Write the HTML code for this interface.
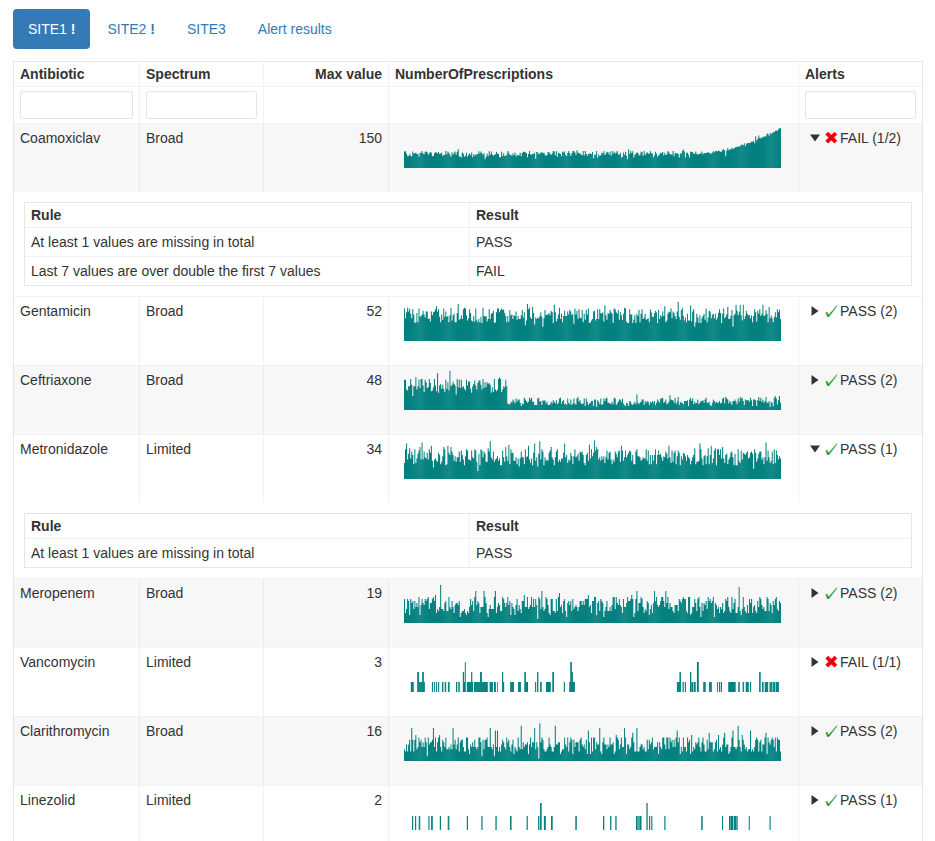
<!DOCTYPE html><html lang="en"><head><meta charset="utf-8"><title>Antibiotic prescriptions</title><style>

*{box-sizing:border-box}
html,body{margin:0;padding:0}
body{font-family:"Liberation Sans",Arial,sans-serif;font-size:14px;line-height:20px;color:#333;background:#fff;width:935px;height:841px;overflow:hidden}
.wrap{padding:9px 13px 0 13px}
.nav{list-style:none;margin:0;padding:0;display:flex}
.nav li{margin-right:2px}
.nav a{display:block;padding:10px 15px;border-radius:4px;color:#337ab7;text-decoration:none}
.nav li.active a{background:#337ab7;color:#fff}
.tbl{margin-top:12px;border:1px solid #e6e6e6;border-bottom:0;width:910px}
.tr{display:flex}
.th,.td{padding:4px 6px;flex:0 0 auto;overflow:hidden}
.c1{width:125px}.c2{width:124px}.c3{width:125px;text-align:right}.c4{width:410px}.c5{width:124px}
.c2,.c3,.c4,.c5{border-left:1px solid rgba(0,0,0,.05)}
.head .th{font-weight:bold;line-height:16px;height:24px;white-space:nowrap}
.head{border-bottom:1px solid rgba(0,0,0,.05)}
.filt .td{height:36px;border-top:0}
.filt input{display:block;width:100%;height:28px;margin:0;padding:5px 7px;border:1px solid rgba(0,0,0,.1);border-radius:3px;background:#fff;font:inherit;color:inherit;outline:none;box-shadow:none;-webkit-appearance:none;appearance:none}
.row{border-top:1px solid rgba(0,0,0,.05);height:69px}
.row.s{background:rgba(0,0,0,.03);border-top-color:rgba(0,0,0,.022)}
.row .td{height:68px}
.c4 svg{display:block}
.exp{display:inline-block;position:relative;width:0;margin:0 10px;height:20px;vertical-align:top}
.exp:after{content:"";position:absolute;top:10px;left:0;width:0;height:0;border-left:5.04px solid transparent;border-right:5.04px solid transparent;border-top:7px solid rgba(0,0,0,.8);transform:translate(-50%,-50%) rotate(-90deg)}
.exp.open:after{transform:translate(-50%,-50%)}
.ic{display:inline-block;width:11.73px;height:20px;vertical-align:top;position:relative;margin-right:-0.6px}
.ic b{position:absolute;font-family:"DejaVu Sans",sans-serif;font-weight:normal;line-height:20px;white-space:nowrap}
.ic.fail b{color:#f30000;font-size:17.6px;left:-1.1px;top:0}
.ic.pass b{color:#0c9216;font-family:"IPAGothic","DejaVu Sans",sans-serif;font-size:17px;left:-2.9px;top:1.2px;-webkit-text-stroke:0.3px #0c9216}
.det{padding:10px}
.det.first{}
.itbl{border:1px solid #e6e6e6}
.itbl .tr + .tr{border-top:1px solid rgba(0,0,0,.05)}
.itbl .th{font-weight:bold;line-height:16px;height:24px;width:444px}
.itbl .td{height:28px;width:444px}
.itbl .th + .th,.itbl .td + .td{border-left:1px solid rgba(0,0,0,.05);width:442px}

</style></head><body><div class="wrap">
<ul class="nav"><li class="active"><a href="#site1">SITE1 <b>!</b></a></li><li><a href="#site2">SITE2 <b>!</b></a></li><li><a href="#site3">SITE3</a></li><li><a href="#alert-results">Alert results</a></li></ul>
<svg width="0" height="0" style="position:absolute"><defs><linearGradient id="tg" gradientUnits="userSpaceOnUse" x1="15.5" y1="0" x2="44.8" y2="0" spreadMethod="repeat"><stop offset="0" stop-color="#138a87"/><stop offset="0.3" stop-color="#028180"/><stop offset="0.7" stop-color="#028180"/><stop offset="1" stop-color="#138a87"/></linearGradient></defs></svg>
<div class="tbl">
<div class="tr head"><div class="th c1">Antibiotic</div><div class="th c2">Spectrum</div><div class="th c3">Max value</div><div class="th c4">NumberOfPrescriptions</div><div class="th c5">Alerts</div></div>
<div class="tr filt"><div class="td c1"><input type="text" aria-label="Filter Antibiotic"></div><div class="td c2"><input type="text" aria-label="Filter Spectrum"></div><div class="td c3"></div><div class="td c4"></div><div class="td c5"><input type="text" aria-label="Filter Alerts"></div></div>
<div class="tr row s"><div class="td c1">Coamoxiclav</div><div class="td c2">Broad</div><div class="td c3">150</div>
<div class="td c4"><svg width="397" height="60" viewBox="0 0 397 60"><path transform="translate(9,0)" fill="url(#tg)" d="M-0.01 40v-16.43h1.05v16.43zM1.02 40v-16.73h1.05v16.73zM2.06 40v-14.16h1.05v14.16zM3.09 40v-11.80h1.05v11.80zM4.12 40v-12.01h1.05v12.01zM5.15 40v-14.10h1.05v14.10zM6.19 40v-12.14h1.05v12.14zM7.22 40v-11.38h1.05v11.38zM8.25 40v-16.40h1.05v16.40zM9.29 40v-14.29h1.05v14.29zM10.32 40v-15.05h1.05v15.05zM11.35 40v-15.20h1.05v15.20zM12.38 40v-14.05h1.05v14.05zM13.42 40v-13.92h1.05v13.92zM14.45 40v-11.25h1.05v11.25zM15.48 40v-15.04h1.05v15.04zM16.52 40v-15.20h1.05v15.20zM17.55 40v-16.95h1.05v16.95zM18.58 40v-14.42h1.05v14.42zM19.61 40v-13.77h1.05v13.77zM20.65 40v-16.33h1.05v16.33zM21.68 40v-16.40h1.05v16.40zM22.71 40v-15.73h1.05v15.73zM23.75 40v-13.36h1.05v13.36zM24.78 40v-14.44h1.05v14.44zM25.81 40v-15.94h1.05v15.94zM26.84 40v-15.33h1.05v15.33zM27.88 40v-11.80h1.05v11.80zM28.91 40v-12.03h1.05v12.03zM29.94 40v-14.87h1.05v14.87zM30.98 40v-15.80h1.05v15.80zM32.01 40v-15.38h1.05v15.38zM33.04 40v-14.44h1.05v14.44zM34.07 40v-16.06h1.05v16.06zM35.11 40v-13.94h1.05v13.94zM36.14 40v-14.41h1.05v14.41zM37.17 40v-15.28h1.05v15.28zM38.21 40v-12.02h1.05v12.02zM39.24 40v-13.29h1.05v13.29zM40.27 40v-13.11h1.05v13.11zM41.31 40v-16.95h1.05v16.95zM42.34 40v-13.87h1.05v13.87zM43.37 40v-16.40h1.05v16.40zM44.40 40v-15.19h1.05v15.19zM45.44 40v-13.52h1.05v13.52zM46.47 40v-11.16h1.05v11.16zM47.50 40v-15.83h1.05v15.83zM48.54 40v-13.28h1.05v13.28zM49.57 40v-15.37h1.05v15.37zM50.60 40v-16.40h1.05v16.40zM51.63 40v-13.23h1.05v13.23zM52.67 40v-16.37h1.05v16.37zM53.70 40v-18.80h1.05v18.80zM54.73 40v-11.62h1.05v11.62zM55.77 40v-11.57h1.05v11.57zM56.80 40v-10.40h1.05v10.40zM57.83 40v-15.39h1.05v15.39zM58.86 40v-14.34h1.05v14.34zM59.90 40v-11.20h1.05v11.20zM60.93 40v-12.21h1.05v12.21zM61.96 40v-15.13h1.05v15.13zM63.00 40v-11.20h1.05v11.20zM64.03 40v-13.23h1.05v13.23zM65.06 40v-14.40h1.05v14.40zM66.09 40v-12.63h1.05v12.63zM67.13 40v-15.45h1.05v15.45zM68.16 40v-10.82h1.05v10.82zM69.19 40v-13.87h1.05v13.87zM70.23 40v-12.20h1.05v12.20zM71.26 40v-13.80h1.05v13.80zM72.29 40v-13.59h1.05v13.59zM73.32 40v-14.07h1.05v14.07zM74.36 40v-16.82h1.05v16.82zM75.39 40v-14.82h1.05v14.82zM76.42 40v-16.51h1.05v16.51zM77.46 40v-14.80h1.05v14.80zM78.49 40v-13.15h1.05v13.15zM79.52 40v-14.74h1.05v14.74zM80.55 40v-8.78h1.05v8.78zM81.59 40v-11.20h1.05v11.20zM82.62 40v-14.34h1.05v14.34zM83.65 40v-11.75h1.05v11.75zM84.69 40v-16.80h1.05v16.80zM85.72 40v-13.00h1.05v13.00zM86.75 40v-16.40h1.05v16.40zM87.78 40v-13.64h1.05v13.64zM88.82 40v-12.22h1.05v12.22zM89.85 40v-13.07h1.05v13.07zM90.88 40v-13.76h1.05v13.76zM91.92 40v-16.36h1.05v16.36zM92.95 40v-14.23h1.05v14.23zM93.98 40v-13.99h1.05v13.99zM95.01 40v-10.80h1.05v10.80zM96.05 40v-10.68h1.05v10.68zM97.08 40v-16.34h1.05v16.34zM98.11 40v-12.04h1.05v12.04zM99.15 40v-14.80h1.05v14.80zM100.18 40v-11.95h1.05v11.95zM101.21 40v-12.23h1.05v12.23zM102.24 40v-13.30h1.05v13.30zM103.28 40v-16.95h1.05v16.95zM104.31 40v-15.33h1.05v15.33zM105.34 40v-12.92h1.05v12.92zM106.38 40v-13.51h1.05v13.51zM107.41 40v-11.90h1.05v11.90zM108.44 40v-14.80h1.05v14.80zM109.47 40v-12.98h1.05v12.98zM110.51 40v-15.38h1.05v15.38zM111.54 40v-11.52h1.05v11.52zM112.57 40v-13.42h1.05v13.42zM113.61 40v-12.48h1.05v12.48zM114.64 40v-12.71h1.05v12.71zM115.67 40v-15.36h1.05v15.36zM116.71 40v-11.80h1.05v11.80zM117.74 40v-15.12h1.05v15.12zM118.77 40v-16.24h1.05v16.24zM119.80 40v-16.17h1.05v16.17zM120.84 40v-15.80h1.05v15.80zM121.87 40v-15.04h1.05v15.04zM122.90 40v-10.77h1.05v10.77zM123.94 40v-13.92h1.05v13.92zM124.97 40v-16.95h1.05v16.95zM126.00 40v-13.68h1.05v13.68zM127.03 40v-13.36h1.05v13.36zM128.07 40v-14.36h1.05v14.36zM129.10 40v-14.07h1.05v14.07zM130.13 40v-15.20h1.05v15.20zM131.17 40v-9.20h1.05v9.20zM132.20 40v-16.05h1.05v16.05zM133.23 40v-15.69h1.05v15.69zM134.26 40v-13.65h1.05v13.65zM135.30 40v-14.62h1.05v14.62zM136.33 40v-15.26h1.05v15.26zM137.36 40v-15.95h1.05v15.95zM138.40 40v-14.77h1.05v14.77zM139.43 40v-15.20h1.05v15.20zM140.46 40v-13.55h1.05v13.55zM141.49 40v-12.06h1.05v12.06zM142.53 40v-13.12h1.05v13.12zM143.56 40v-15.93h1.05v15.93zM144.59 40v-15.85h1.05v15.85zM145.63 40v-14.31h1.05v14.31zM146.66 40v-12.99h1.05v12.99zM147.69 40v-14.61h1.05v14.61zM148.72 40v-16.95h1.05v16.95zM149.76 40v-16.55h1.05v16.55zM150.79 40v-12.77h1.05v12.77zM151.82 40v-16.80h1.05v16.80zM152.86 40v-11.35h1.05v11.35zM153.89 40v-15.20h1.05v15.20zM154.92 40v-14.39h1.05v14.39zM155.95 40v-14.09h1.05v14.09zM156.99 40v-11.80h1.05v11.80zM158.02 40v-16.39h1.05v16.39zM159.05 40v-15.59h1.05v15.59zM160.09 40v-16.49h1.05v16.49zM161.12 40v-13.03h1.05v13.03zM162.15 40v-11.95h1.05v11.95zM163.18 40v-14.97h1.05v14.97zM164.22 40v-16.95h1.05v16.95zM165.25 40v-14.70h1.05v14.70zM166.28 40v-11.90h1.05v11.90zM167.32 40v-14.49h1.05v14.49zM168.35 40v-16.68h1.05v16.68zM169.38 40v-17.20h1.05v17.20zM170.41 40v-15.53h1.05v15.53zM171.45 40v-12.91h1.05v12.91zM172.48 40v-17.80h1.05v17.80zM173.51 40v-15.50h1.05v15.50zM174.55 40v-14.60h1.05v14.60zM175.58 40v-14.80h1.05v14.80zM176.61 40v-13.28h1.05v13.28zM177.64 40v-12.77h1.05v12.77zM178.68 40v-16.95h1.05v16.95zM179.71 40v-12.41h1.05v12.41zM180.74 40v-16.95h1.05v16.95zM181.78 40v-13.97h1.05v13.97zM182.81 40v-12.12h1.05v12.12zM183.84 40v-14.04h1.05v14.04zM184.87 40v-14.28h1.05v14.28zM185.91 40v-14.41h1.05v14.41zM186.94 40v-13.68h1.05v13.68zM187.97 40v-16.04h1.05v16.04zM189.01 40v-9.74h1.05v9.74zM190.04 40v-13.01h1.05v13.01zM191.07 40v-13.55h1.05v13.55zM192.11 40v-16.95h1.05v16.95zM193.14 40v-10.34h1.05v10.34zM194.17 40v-13.41h1.05v13.41zM195.20 40v-11.92h1.05v11.92zM196.24 40v-12.81h1.05v12.81zM197.27 40v-15.23h1.05v15.23zM198.30 40v-14.80h1.05v14.80zM199.34 40v-16.71h1.05v16.71zM200.37 40v-12.93h1.05v12.93zM201.40 40v-14.54h1.05v14.54zM202.43 40v-16.22h1.05v16.22zM203.47 40v-15.71h1.05v15.71zM204.50 40v-13.42h1.05v13.42zM205.53 40v-16.13h1.05v16.13zM206.57 40v-12.33h1.05v12.33zM207.60 40v-16.95h1.05v16.95zM208.63 40v-14.33h1.05v14.33zM209.66 40v-16.40h1.05v16.40zM210.70 40v-14.54h1.05v14.54zM211.73 40v-15.61h1.05v15.61zM212.76 40v-16.95h1.05v16.95zM213.80 40v-13.78h1.05v13.78zM214.83 40v-13.36h1.05v13.36zM215.86 40v-15.13h1.05v15.13zM216.89 40v-10.40h1.05v10.40zM217.93 40v-10.89h1.05v10.89zM218.96 40v-15.59h1.05v15.59zM219.99 40v-13.34h1.05v13.34zM221.03 40v-16.13h1.05v16.13zM222.06 40v-12.14h1.05v12.14zM223.09 40v-8.67h1.05v8.67zM224.12 40v-18.80h1.05v18.80zM225.16 40v-14.33h1.05v14.33zM226.19 40v-16.95h1.05v16.95zM227.22 40v-15.01h1.05v15.01zM228.26 40v-16.80h1.05v16.80zM229.29 40v-10.40h1.05v10.40zM230.32 40v-13.36h1.05v13.36zM231.35 40v-14.18h1.05v14.18zM232.39 40v-15.80h1.05v15.80zM233.42 40v-15.00h1.05v15.00zM234.45 40v-12.55h1.05v12.55zM235.49 40v-13.21h1.05v13.21zM236.52 40v-16.40h1.05v16.40zM237.55 40v-15.74h1.05v15.74zM238.58 40v-12.17h1.05v12.17zM239.62 40v-16.95h1.05v16.95zM240.65 40v-12.94h1.05v12.94zM241.68 40v-14.80h1.05v14.80zM242.72 40v-15.80h1.05v15.80zM243.75 40v-14.46h1.05v14.46zM244.78 40v-14.36h1.05v14.36zM245.81 40v-16.95h1.05v16.95zM246.85 40v-14.80h1.05v14.80zM247.88 40v-14.87h1.05v14.87zM248.91 40v-10.66h1.05v10.66zM249.95 40v-12.65h1.05v12.65zM250.98 40v-16.20h1.05v16.20zM252.01 40v-14.40h1.05v14.40zM253.04 40v-11.20h1.05v11.20zM254.08 40v-12.85h1.05v12.85zM255.11 40v-13.47h1.05v13.47zM256.14 40v-15.31h1.05v15.31zM257.18 40v-14.76h1.05v14.76zM258.21 40v-15.89h1.05v15.89zM259.24 40v-12.52h1.05v12.52zM260.27 40v-15.20h1.05v15.20zM261.31 40v-13.11h1.05v13.11zM262.34 40v-13.49h1.05v13.49zM263.37 40v-16.95h1.05v16.95zM264.41 40v-15.80h1.05v15.80zM265.44 40v-13.78h1.05v13.78zM266.47 40v-13.65h1.05v13.65zM267.51 40v-13.33h1.05v13.33zM268.54 40v-16.93h1.05v16.93zM269.57 40v-11.80h1.05v11.80zM270.60 40v-15.37h1.05v15.37zM271.64 40v-14.38h1.05v14.38zM272.67 40v-14.80h1.05v14.80zM273.70 40v-13.90h1.05v13.90zM274.74 40v-10.40h1.05v10.40zM275.77 40v-14.78h1.05v14.78zM276.80 40v-14.20h1.05v14.20zM277.83 40v-16.95h1.05v16.95zM278.87 40v-18.80h1.05v18.80zM279.90 40v-16.49h1.05v16.49zM280.93 40v-10.49h1.05v10.49zM281.97 40v-15.20h1.05v15.20zM283.00 40v-15.34h1.05v15.34zM284.03 40v-13.20h1.05v13.20zM285.06 40v-10.40h1.05v10.40zM286.10 40v-16.15h1.05v16.15zM287.13 40v-16.22h1.05v16.22zM288.16 40v-15.64h1.05v15.64zM289.20 40v-14.34h1.05v14.34zM290.23 40v-14.17h1.05v14.17zM291.26 40v-16.40h1.05v16.40zM292.29 40v-14.01h1.05v14.01zM293.33 40v-13.46h1.05v13.46zM294.36 40v-13.75h1.05v13.75zM295.39 40v-14.22h1.05v14.22zM296.43 40v-14.69h1.05v14.69zM297.46 40v-16.40h1.05v16.40zM298.49 40v-13.40h1.05v13.40zM299.52 40v-15.05h1.05v15.05zM300.56 40v-14.66h1.05v14.66zM301.59 40v-15.10h1.05v15.10zM302.62 40v-15.20h1.05v15.20zM303.66 40v-16.12h1.05v16.12zM304.69 40v-15.05h1.05v15.05zM305.72 40v-14.84h1.05v14.84zM306.75 40v-14.29h1.05v14.29zM307.79 40v-15.53h1.05v15.53zM308.82 40v-16.80h1.05v16.80zM309.85 40v-15.67h1.05v15.67zM310.89 40v-17.20h1.05v17.20zM311.92 40v-16.83h1.05v16.83zM312.95 40v-16.74h1.05v16.74zM313.98 40v-17.50h1.05v17.50zM315.02 40v-16.68h1.05v16.68zM316.05 40v-16.27h1.05v16.27zM317.08 40v-16.18h1.05v16.18zM318.12 40v-18.17h1.05v18.17zM319.15 40v-18.80h1.05v18.80zM320.18 40v-17.56h1.05v17.56zM321.21 40v-11.80h1.05v11.80zM322.25 40v-17.62h1.05v17.62zM323.28 40v-20.04h1.05v20.04zM324.31 40v-17.80h1.05v17.80zM325.35 40v-18.60h1.05v18.60zM326.38 40v-18.77h1.05v18.77zM327.41 40v-20.50h1.05v20.50zM328.44 40v-18.86h1.05v18.86zM329.48 40v-19.60h1.05v19.60zM330.51 40v-20.44h1.05v20.44zM331.54 40v-20.91h1.05v20.91zM332.58 40v-21.05h1.05v21.05zM333.61 40v-21.80h1.05v21.80zM334.64 40v-21.36h1.05v21.36zM335.67 40v-21.89h1.05v21.89zM336.71 40v-23.40h1.05v23.40zM337.74 40v-23.21h1.05v23.21zM338.77 40v-22.63h1.05v22.63zM339.81 40v-24.82h1.05v24.82zM340.84 40v-22.04h1.05v22.04zM341.87 40v-24.16h1.05v24.16zM342.91 40v-25.03h1.05v25.03zM343.94 40v-24.80h1.05v24.80zM344.97 40v-25.33h1.05v25.33zM346.00 40v-25.30h1.05v25.30zM347.04 40v-26.52h1.05v26.52zM348.07 40v-26.27h1.05v26.27zM349.10 40v-27.20h1.05v27.20zM350.14 40v-24.85h1.05v24.85zM351.17 40v-31.80h1.05v31.80zM352.20 40v-27.46h1.05v27.46zM353.23 40v-29.37h1.05v29.37zM354.27 40v-32.40h1.05v32.40zM355.30 40v-30.09h1.05v30.09zM356.33 40v-29.59h1.05v29.59zM357.37 40v-30.77h1.05v30.77zM358.40 40v-30.59h1.05v30.59zM359.43 40v-31.54h1.05v31.54zM360.46 40v-31.74h1.05v31.74zM361.50 40v-31.61h1.05v31.61zM362.53 40v-34.52h1.05v34.52zM363.56 40v-33.97h1.05v33.97zM364.60 40v-32.13h1.05v32.13zM365.63 40v-35.15h1.05v35.15zM366.66 40v-33.74h1.05v33.74zM367.69 40v-35.27h1.05v35.27zM368.73 40v-35.51h1.05v35.51zM369.76 40v-36.10h1.05v36.10zM370.79 40v-37.32h1.05v37.32zM371.83 40v-37.40h1.05v37.40zM372.86 40v-37.02h1.05v37.02zM373.89 40v-38.82h1.05v38.82zM374.92 40v-39.72h1.05v39.72zM375.96 40v-39.74h1.05v39.74z"/></svg></div>
<div class="td c5"><span class="exp open"></span><span class="ic fail"><b>&#10006;</b></span> FAIL (1/2)</div></div>
<div class="det"><div class="itbl"><div class="tr"><div class="th">Rule</div><div class="th">Result</div></div>
<div class="tr"><div class="td">At least 1 values are missing in total</div><div class="td">PASS</div></div>
<div class="tr"><div class="td">Last 7 values are over double the first 7 values</div><div class="td">FAIL</div></div>
</div></div>
<div class="tr row"><div class="td c1">Gentamicin</div><div class="td c2">Broad</div><div class="td c3">52</div>
<div class="td c4"><svg width="397" height="60" viewBox="0 0 397 60"><path transform="translate(9,0)" fill="url(#tg)" d="M-0.01 40v-32.45h1.05v32.45zM1.02 40v-22.64h1.05v22.64zM2.06 40v-28.68h1.05v28.68zM3.09 40v-33.21h1.05v33.21zM4.12 40v-29.43h1.05v29.43zM5.15 40v-32.45h1.05v32.45zM6.19 40v-27.17h1.05v27.17zM7.22 40v-22.64h1.05v22.64zM8.25 40v-31.70h1.05v31.70zM9.29 40v-26.42h1.05v26.42zM10.32 40v-18.11h1.05v18.11zM11.35 40v-18.87h1.05v18.87zM12.38 40v-27.92h1.05v27.92zM13.42 40v-18.87h1.05v18.87zM14.45 40v-32.45h1.05v32.45zM15.48 40v-24.15h1.05v24.15zM16.52 40v-24.91h1.05v24.91zM17.55 40v-26.42h1.05v26.42zM18.58 40v-30.19h1.05v30.19zM19.61 40v-26.42h1.05v26.42zM20.65 40v-23.40h1.05v23.40zM21.68 40v-29.43h1.05v29.43zM22.71 40v-29.43h1.05v29.43zM23.75 40v-21.89h1.05v21.89zM24.78 40v-22.64h1.05v22.64zM25.81 40v-19.62h1.05v19.62zM26.84 40v-29.43h1.05v29.43zM27.88 40v-25.66h1.05v25.66zM28.91 40v-28.68h1.05v28.68zM29.94 40v-29.43h1.05v29.43zM30.98 40v-31.70h1.05v31.70zM32.01 40v-34.72h1.05v34.72zM33.04 40v-29.43h1.05v29.43zM34.07 40v-31.70h1.05v31.70zM35.11 40v-24.15h1.05v24.15zM36.14 40v-18.87h1.05v18.87zM37.17 40v-26.42h1.05v26.42zM38.21 40v-21.13h1.05v21.13zM39.24 40v-32.45h1.05v32.45zM40.27 40v-24.15h1.05v24.15zM41.31 40v-29.43h1.05v29.43zM42.34 40v-24.15h1.05v24.15zM43.37 40v-24.91h1.05v24.91zM44.40 40v-18.87h1.05v18.87zM45.44 40v-25.66h1.05v25.66zM46.47 40v-33.21h1.05v33.21zM47.50 40v-20.38h1.05v20.38zM48.54 40v-25.66h1.05v25.66zM49.57 40v-27.17h1.05v27.17zM50.60 40v-18.87h1.05v18.87zM51.63 40v-18.87h1.05v18.87zM52.67 40v-27.92h1.05v27.92zM53.70 40v-36.98h1.05v36.98zM54.73 40v-21.13h1.05v21.13zM55.77 40v-21.89h1.05v21.89zM56.80 40v-25.66h1.05v25.66zM57.83 40v-21.89h1.05v21.89zM58.86 40v-31.70h1.05v31.70zM59.90 40v-33.21h1.05v33.21zM60.93 40v-32.45h1.05v32.45zM61.96 40v-25.66h1.05v25.66zM63.00 40v-20.38h1.05v20.38zM64.03 40v-22.64h1.05v22.64zM65.06 40v-31.70h1.05v31.70zM66.09 40v-27.92h1.05v27.92zM67.13 40v-20.38h1.05v20.38zM68.16 40v-19.62h1.05v19.62zM69.19 40v-24.91h1.05v24.91zM70.23 40v-19.62h1.05v19.62zM71.26 40v-32.45h1.05v32.45zM72.29 40v-21.13h1.05v21.13zM73.32 40v-18.87h1.05v18.87zM74.36 40v-21.89h1.05v21.89zM75.39 40v-18.87h1.05v18.87zM76.42 40v-24.15h1.05v24.15zM77.46 40v-18.11h1.05v18.11zM78.49 40v-33.21h1.05v33.21zM79.52 40v-24.91h1.05v24.91zM80.55 40v-24.15h1.05v24.15zM81.59 40v-24.91h1.05v24.91zM82.62 40v-19.62h1.05v19.62zM83.65 40v-21.89h1.05v21.89zM84.69 40v-31.70h1.05v31.70zM85.72 40v-21.89h1.05v21.89zM86.75 40v-27.17h1.05v27.17zM87.78 40v-27.92h1.05v27.92zM88.82 40v-30.19h1.05v30.19zM89.85 40v-18.11h1.05v18.11zM90.88 40v-18.87h1.05v18.87zM91.92 40v-28.68h1.05v28.68zM92.95 40v-32.45h1.05v32.45zM93.98 40v-32.45h1.05v32.45zM95.01 40v-28.68h1.05v28.68zM96.05 40v-30.94h1.05v30.94zM97.08 40v-32.45h1.05v32.45zM98.11 40v-30.94h1.05v30.94zM99.15 40v-31.70h1.05v31.70zM100.18 40v-27.92h1.05v27.92zM101.21 40v-24.91h1.05v24.91zM102.24 40v-18.87h1.05v18.87zM103.28 40v-24.91h1.05v24.91zM104.31 40v-19.62h1.05v19.62zM105.34 40v-30.94h1.05v30.94zM106.38 40v-25.66h1.05v25.66zM107.41 40v-26.42h1.05v26.42zM108.44 40v-21.89h1.05v21.89zM109.47 40v-25.66h1.05v25.66zM110.51 40v-24.91h1.05v24.91zM111.54 40v-29.43h1.05v29.43zM112.57 40v-21.13h1.05v21.13zM113.61 40v-24.91h1.05v24.91zM114.64 40v-21.89h1.05v21.89zM115.67 40v-21.89h1.05v21.89zM116.71 40v-25.66h1.05v25.66zM117.74 40v-30.94h1.05v30.94zM118.77 40v-23.40h1.05v23.40zM119.80 40v-28.68h1.05v28.68zM120.84 40v-15.85h1.05v15.85zM121.87 40v-20.38h1.05v20.38zM122.90 40v-36.98h1.05v36.98zM123.94 40v-31.70h1.05v31.70zM124.97 40v-33.21h1.05v33.21zM126.00 40v-23.40h1.05v23.40zM127.03 40v-21.89h1.05v21.89zM128.07 40v-33.96h1.05v33.96zM129.10 40v-27.92h1.05v27.92zM130.13 40v-16.60h1.05v16.60zM131.17 40v-23.40h1.05v23.40zM132.20 40v-21.89h1.05v21.89zM133.23 40v-23.40h1.05v23.40zM134.26 40v-22.64h1.05v22.64zM135.30 40v-24.91h1.05v24.91zM136.33 40v-28.68h1.05v28.68zM137.36 40v-24.15h1.05v24.15zM138.40 40v-14.34h1.05v14.34zM139.43 40v-22.64h1.05v22.64zM140.46 40v-30.94h1.05v30.94zM141.49 40v-25.66h1.05v25.66zM142.53 40v-26.42h1.05v26.42zM143.56 40v-26.42h1.05v26.42zM144.59 40v-27.92h1.05v27.92zM145.63 40v-25.66h1.05v25.66zM146.66 40v-30.19h1.05v30.19zM147.69 40v-28.68h1.05v28.68zM148.72 40v-18.11h1.05v18.11zM149.76 40v-36.23h1.05v36.23zM150.79 40v-28.68h1.05v28.68zM151.82 40v-19.62h1.05v19.62zM152.86 40v-21.89h1.05v21.89zM153.89 40v-26.42h1.05v26.42zM154.92 40v-33.21h1.05v33.21zM155.95 40v-21.89h1.05v21.89zM156.99 40v-27.17h1.05v27.17zM158.02 40v-18.87h1.05v18.87zM159.05 40v-24.91h1.05v24.91zM160.09 40v-30.19h1.05v30.19zM161.12 40v-24.91h1.05v24.91zM162.15 40v-24.91h1.05v24.91zM163.18 40v-29.43h1.05v29.43zM164.22 40v-26.42h1.05v26.42zM165.25 40v-30.94h1.05v30.94zM166.28 40v-29.43h1.05v29.43zM167.32 40v-25.66h1.05v25.66zM168.35 40v-27.17h1.05v27.17zM169.38 40v-17.36h1.05v17.36zM170.41 40v-32.45h1.05v32.45zM171.45 40v-26.42h1.05v26.42zM172.48 40v-30.19h1.05v30.19zM173.51 40v-21.89h1.05v21.89zM174.55 40v-31.70h1.05v31.70zM175.58 40v-23.40h1.05v23.40zM176.61 40v-22.64h1.05v22.64zM177.64 40v-30.94h1.05v30.94zM178.68 40v-18.87h1.05v18.87zM179.71 40v-27.17h1.05v27.17zM180.74 40v-21.13h1.05v21.13zM181.78 40v-30.94h1.05v30.94zM182.81 40v-26.42h1.05v26.42zM183.84 40v-32.45h1.05v32.45zM184.87 40v-18.11h1.05v18.11zM185.91 40v-18.87h1.05v18.87zM186.94 40v-20.38h1.05v20.38zM187.97 40v-21.89h1.05v21.89zM189.01 40v-29.43h1.05v29.43zM190.04 40v-30.19h1.05v30.19zM191.07 40v-20.38h1.05v20.38zM192.11 40v-21.89h1.05v21.89zM193.14 40v-31.70h1.05v31.70zM194.17 40v-21.89h1.05v21.89zM195.20 40v-31.70h1.05v31.70zM196.24 40v-27.92h1.05v27.92zM197.27 40v-27.17h1.05v27.17zM198.30 40v-28.68h1.05v28.68zM199.34 40v-19.62h1.05v19.62zM200.37 40v-35.47h1.05v35.47zM201.40 40v-25.66h1.05v25.66zM202.43 40v-21.13h1.05v21.13zM203.47 40v-27.92h1.05v27.92zM204.50 40v-27.17h1.05v27.17zM205.53 40v-30.94h1.05v30.94zM206.57 40v-28.68h1.05v28.68zM207.60 40v-27.17h1.05v27.17zM208.63 40v-18.11h1.05v18.11zM209.66 40v-32.45h1.05v32.45zM210.70 40v-31.70h1.05v31.70zM211.73 40v-28.68h1.05v28.68zM212.76 40v-27.17h1.05v27.17zM213.80 40v-30.94h1.05v30.94zM214.83 40v-21.13h1.05v21.13zM215.86 40v-28.68h1.05v28.68zM216.89 40v-25.66h1.05v25.66zM217.93 40v-21.13h1.05v21.13zM218.96 40v-27.17h1.05v27.17zM219.99 40v-33.21h1.05v33.21zM221.03 40v-32.45h1.05v32.45zM222.06 40v-19.62h1.05v19.62zM223.09 40v-18.11h1.05v18.11zM224.12 40v-18.11h1.05v18.11zM225.16 40v-31.70h1.05v31.70zM226.19 40v-26.42h1.05v26.42zM227.22 40v-26.42h1.05v26.42zM228.26 40v-18.11h1.05v18.11zM229.29 40v-21.13h1.05v21.13zM230.32 40v-25.66h1.05v25.66zM231.35 40v-18.11h1.05v18.11zM232.39 40v-27.17h1.05v27.17zM233.42 40v-24.91h1.05v24.91zM234.45 40v-30.94h1.05v30.94zM235.49 40v-18.87h1.05v18.87zM236.52 40v-27.17h1.05v27.17zM237.55 40v-31.70h1.05v31.70zM238.58 40v-21.89h1.05v21.89zM239.62 40v-23.40h1.05v23.40zM240.65 40v-27.17h1.05v27.17zM241.68 40v-21.13h1.05v21.13zM242.72 40v-21.89h1.05v21.89zM243.75 40v-22.64h1.05v22.64zM244.78 40v-18.87h1.05v18.87zM245.81 40v-31.70h1.05v31.70zM246.85 40v-28.68h1.05v28.68zM247.88 40v-24.15h1.05v24.15zM248.91 40v-24.15h1.05v24.15zM249.95 40v-27.92h1.05v27.92zM250.98 40v-30.19h1.05v30.19zM252.01 40v-28.68h1.05v28.68zM253.04 40v-18.11h1.05v18.11zM254.08 40v-30.94h1.05v30.94zM255.11 40v-21.89h1.05v21.89zM256.14 40v-25.66h1.05v25.66zM257.18 40v-24.15h1.05v24.15zM258.21 40v-29.43h1.05v29.43zM259.24 40v-24.91h1.05v24.91zM260.27 40v-34.72h1.05v34.72zM261.31 40v-18.87h1.05v18.87zM262.34 40v-20.38h1.05v20.38zM263.37 40v-27.17h1.05v27.17zM264.41 40v-29.43h1.05v29.43zM265.44 40v-28.68h1.05v28.68zM266.47 40v-32.45h1.05v32.45zM267.51 40v-22.64h1.05v22.64zM268.54 40v-29.43h1.05v29.43zM269.57 40v-27.92h1.05v27.92zM270.60 40v-24.91h1.05v24.91zM271.64 40v-21.89h1.05v21.89zM272.67 40v-29.43h1.05v29.43zM273.70 40v-39.25h1.05v39.25zM274.74 40v-24.15h1.05v24.15zM275.77 40v-21.13h1.05v21.13zM276.80 40v-30.94h1.05v30.94zM277.83 40v-33.21h1.05v33.21zM278.87 40v-24.91h1.05v24.91zM279.90 40v-20.38h1.05v20.38zM280.93 40v-23.40h1.05v23.40zM281.97 40v-18.87h1.05v18.87zM283.00 40v-27.17h1.05v27.17zM284.03 40v-20.38h1.05v20.38zM285.06 40v-20.38h1.05v20.38zM286.10 40v-35.47h1.05v35.47zM287.13 40v-19.62h1.05v19.62zM288.16 40v-29.43h1.05v29.43zM289.20 40v-31.70h1.05v31.70zM290.23 40v-14.34h1.05v14.34zM291.26 40v-18.87h1.05v18.87zM292.29 40v-27.17h1.05v27.17zM293.33 40v-23.40h1.05v23.40zM294.36 40v-18.11h1.05v18.11zM295.39 40v-25.66h1.05v25.66zM296.43 40v-18.11h1.05v18.11zM297.46 40v-22.64h1.05v22.64zM298.49 40v-24.91h1.05v24.91zM299.52 40v-27.17h1.05v27.17zM300.56 40v-21.13h1.05v21.13zM301.59 40v-32.45h1.05v32.45zM302.62 40v-18.87h1.05v18.87zM303.66 40v-23.40h1.05v23.40zM304.69 40v-30.19h1.05v30.19zM305.72 40v-29.43h1.05v29.43zM306.75 40v-22.64h1.05v22.64zM307.79 40v-26.42h1.05v26.42zM308.82 40v-27.17h1.05v27.17zM309.85 40v-22.64h1.05v22.64zM310.89 40v-27.17h1.05v27.17zM311.92 40v-21.13h1.05v21.13zM312.95 40v-23.40h1.05v23.40zM313.98 40v-27.92h1.05v27.92zM315.02 40v-31.70h1.05v31.70zM316.05 40v-27.92h1.05v27.92zM317.08 40v-18.11h1.05v18.11zM318.12 40v-27.17h1.05v27.17zM319.15 40v-32.45h1.05v32.45zM320.18 40v-22.64h1.05v22.64zM321.21 40v-24.15h1.05v24.15zM322.25 40v-26.42h1.05v26.42zM323.28 40v-33.96h1.05v33.96zM324.31 40v-21.89h1.05v21.89zM325.35 40v-21.89h1.05v21.89zM326.38 40v-24.91h1.05v24.91zM327.41 40v-30.94h1.05v30.94zM328.44 40v-14.34h1.05v14.34zM329.48 40v-25.66h1.05v25.66zM330.51 40v-27.17h1.05v27.17zM331.54 40v-36.23h1.05v36.23zM332.58 40v-30.19h1.05v30.19zM333.61 40v-25.66h1.05v25.66zM334.64 40v-28.68h1.05v28.68zM335.67 40v-36.23h1.05v36.23zM336.71 40v-25.66h1.05v25.66zM337.74 40v-20.38h1.05v20.38zM338.77 40v-36.23h1.05v36.23zM339.81 40v-21.89h1.05v21.89zM340.84 40v-24.91h1.05v24.91zM341.87 40v-30.19h1.05v30.19zM342.91 40v-27.17h1.05v27.17zM343.94 40v-25.66h1.05v25.66zM344.97 40v-25.66h1.05v25.66zM346.00 40v-22.64h1.05v22.64zM347.04 40v-25.66h1.05v25.66zM348.07 40v-18.87h1.05v18.87zM349.10 40v-24.91h1.05v24.91zM350.14 40v-31.70h1.05v31.70zM351.17 40v-28.68h1.05v28.68zM352.20 40v-19.62h1.05v19.62zM353.23 40v-30.19h1.05v30.19zM354.27 40v-27.17h1.05v27.17zM355.30 40v-31.70h1.05v31.70zM356.33 40v-24.91h1.05v24.91zM357.37 40v-27.17h1.05v27.17zM358.40 40v-36.23h1.05v36.23zM359.43 40v-24.91h1.05v24.91zM360.46 40v-25.66h1.05v25.66zM361.50 40v-30.94h1.05v30.94zM362.53 40v-27.17h1.05v27.17zM363.56 40v-18.87h1.05v18.87zM364.60 40v-33.96h1.05v33.96zM365.63 40v-22.64h1.05v22.64zM366.66 40v-25.66h1.05v25.66zM367.69 40v-22.64h1.05v22.64zM368.73 40v-18.87h1.05v18.87zM369.76 40v-24.15h1.05v24.15zM370.79 40v-28.68h1.05v28.68zM371.83 40v-23.40h1.05v23.40zM372.86 40v-31.70h1.05v31.70zM373.89 40v-28.68h1.05v28.68zM374.92 40v-30.94h1.05v30.94zM375.96 40v-21.89h1.05v21.89z"/></svg></div>
<div class="td c5"><span class="exp"></span><span class="ic pass"><b>&#10003;</b></span> PASS (2)</div></div>
<div class="tr row s"><div class="td c1">Ceftriaxone</div><div class="td c2">Broad</div><div class="td c3">48</div>
<div class="td c4"><svg width="397" height="60" viewBox="0 0 397 60"><path transform="translate(9,0)" fill="url(#tg)" d="M-0.01 40v-30.20h1.05v30.20zM1.02 40v-30.20h1.05v30.20zM2.06 40v-20.41h1.05v20.41zM3.09 40v-19.59h1.05v19.59zM4.12 40v-23.67h1.05v23.67zM5.15 40v-23.67h1.05v23.67zM6.19 40v-31.02h1.05v31.02zM7.22 40v-25.31h1.05v25.31zM8.25 40v-13.88h1.05v13.88zM9.29 40v-23.67h1.05v23.67zM10.32 40v-23.67h1.05v23.67zM11.35 40v-32.65h1.05v32.65zM12.38 40v-20.41h1.05v20.41zM13.42 40v-23.67h1.05v23.67zM14.45 40v-30.20h1.05v30.20zM15.48 40v-22.04h1.05v22.04zM16.52 40v-31.02h1.05v31.02zM17.55 40v-31.02h1.05v31.02zM18.58 40v-24.49h1.05v24.49zM19.61 40v-17.96h1.05v17.96zM20.65 40v-30.20h1.05v30.20zM21.68 40v-27.76h1.05v27.76zM22.71 40v-22.04h1.05v22.04zM23.75 40v-22.86h1.05v22.86zM24.78 40v-31.02h1.05v31.02zM25.81 40v-26.94h1.05v26.94zM26.84 40v-18.78h1.05v18.78zM27.88 40v-19.59h1.05v19.59zM28.91 40v-22.86h1.05v22.86zM29.94 40v-31.02h1.05v31.02zM30.98 40v-24.49h1.05v24.49zM32.01 40v-18.78h1.05v18.78zM33.04 40v-36.73h1.05v36.73zM34.07 40v-17.14h1.05v17.14zM35.11 40v-24.49h1.05v24.49zM36.14 40v-26.12h1.05v26.12zM37.17 40v-21.22h1.05v21.22zM38.21 40v-25.31h1.05v25.31zM39.24 40v-21.22h1.05v21.22zM40.27 40v-17.96h1.05v17.96zM41.31 40v-30.20h1.05v30.20zM42.34 40v-21.22h1.05v21.22zM43.37 40v-27.76h1.05v27.76zM44.40 40v-19.59h1.05v19.59zM45.44 40v-39.18h1.05v39.18zM46.47 40v-23.67h1.05v23.67zM47.50 40v-25.31h1.05v25.31zM48.54 40v-28.57h1.05v28.57zM49.57 40v-26.12h1.05v26.12zM50.60 40v-24.49h1.05v24.49zM51.63 40v-15.51h1.05v15.51zM52.67 40v-31.02h1.05v31.02zM53.70 40v-22.86h1.05v22.86zM54.73 40v-30.20h1.05v30.20zM55.77 40v-22.04h1.05v22.04zM56.80 40v-30.20h1.05v30.20zM57.83 40v-22.86h1.05v22.86zM58.86 40v-23.67h1.05v23.67zM59.90 40v-21.22h1.05v21.22zM60.93 40v-19.59h1.05v19.59zM61.96 40v-30.20h1.05v30.20zM63.00 40v-24.49h1.05v24.49zM64.03 40v-28.57h1.05v28.57zM65.06 40v-28.57h1.05v28.57zM66.09 40v-21.22h1.05v21.22zM67.13 40v-17.14h1.05v17.14zM68.16 40v-23.67h1.05v23.67zM69.19 40v-26.12h1.05v26.12zM70.23 40v-29.39h1.05v29.39zM71.26 40v-24.49h1.05v24.49zM72.29 40v-20.41h1.05v20.41zM73.32 40v-26.94h1.05v26.94zM74.36 40v-29.39h1.05v29.39zM75.39 40v-29.39h1.05v29.39zM76.42 40v-25.31h1.05v25.31zM77.46 40v-20.41h1.05v20.41zM78.49 40v-31.02h1.05v31.02zM79.52 40v-22.04h1.05v22.04zM80.55 40v-27.76h1.05v27.76zM81.59 40v-22.86h1.05v22.86zM82.62 40v-27.76h1.05v27.76zM83.65 40v-26.12h1.05v26.12zM84.69 40v-26.94h1.05v26.94zM85.72 40v-25.31h1.05v25.31zM86.75 40v-17.14h1.05v17.14zM87.78 40v-22.86h1.05v22.86zM88.82 40v-17.96h1.05v17.96zM89.85 40v-31.02h1.05v31.02zM90.88 40v-20.41h1.05v20.41zM91.92 40v-18.78h1.05v18.78zM92.95 40v-20.41h1.05v20.41zM93.98 40v-31.02h1.05v31.02zM95.01 40v-32.65h1.05v32.65zM96.05 40v-31.02h1.05v31.02zM97.08 40v-17.96h1.05v17.96zM98.11 40v-20.41h1.05v20.41zM99.15 40v-23.67h1.05v23.67zM100.18 40v-22.86h1.05v22.86zM101.21 40v-30.20h1.05v30.20zM102.24 40v-23.67h1.05v23.67zM103.28 40v-6.53h1.05v6.53zM104.31 40v-5.71h1.05v5.71zM105.34 40v-5.71h1.05v5.71zM106.38 40v-8.16h1.05v8.16zM107.41 40v-7.35h1.05v7.35zM108.44 40v-10.61h1.05v10.61zM109.47 40v-8.98h1.05v8.98zM110.51 40v-6.53h1.05v6.53zM111.54 40v-11.43h1.05v11.43zM112.57 40v-8.16h1.05v8.16zM113.61 40v-10.61h1.05v10.61zM114.64 40v-10.61h1.05v10.61zM115.67 40v-7.35h1.05v7.35zM116.71 40v-4.08h1.05v4.08zM117.74 40v-6.53h1.05v6.53zM118.77 40v-5.71h1.05v5.71zM119.80 40v-12.24h1.05v12.24zM120.84 40v-10.61h1.05v10.61zM121.87 40v-8.98h1.05v8.98zM122.90 40v-7.35h1.05v7.35zM123.94 40v-8.16h1.05v8.16zM124.97 40v-12.24h1.05v12.24zM126.00 40v-10.61h1.05v10.61zM127.03 40v-12.24h1.05v12.24zM128.07 40v-8.16h1.05v8.16zM129.10 40v-8.16h1.05v8.16zM130.13 40v-4.90h1.05v4.90zM131.17 40v-4.90h1.05v4.90zM132.20 40v-4.90h1.05v4.90zM133.23 40v-11.43h1.05v11.43zM134.26 40v-12.24h1.05v12.24zM135.30 40v-8.16h1.05v8.16zM136.33 40v-8.98h1.05v8.98zM137.36 40v-4.90h1.05v4.90zM138.40 40v-9.80h1.05v9.80zM139.43 40v-8.98h1.05v8.98zM140.46 40v-9.80h1.05v9.80zM141.49 40v-6.53h1.05v6.53zM142.53 40v-8.16h1.05v8.16zM143.56 40v-4.90h1.05v4.90zM144.59 40v-4.90h1.05v4.90zM145.63 40v-5.71h1.05v5.71zM146.66 40v-8.16h1.05v8.16zM147.69 40v-6.53h1.05v6.53zM148.72 40v-9.80h1.05v9.80zM149.76 40v-8.16h1.05v8.16zM150.79 40v-6.53h1.05v6.53zM151.82 40v-9.80h1.05v9.80zM152.86 40v-5.71h1.05v5.71zM153.89 40v-7.35h1.05v7.35zM154.92 40v-11.43h1.05v11.43zM155.95 40v-12.24h1.05v12.24zM156.99 40v-6.53h1.05v6.53zM158.02 40v-8.98h1.05v8.98zM159.05 40v-9.80h1.05v9.80zM160.09 40v-5.71h1.05v5.71zM161.12 40v-6.53h1.05v6.53zM162.15 40v-4.90h1.05v4.90zM163.18 40v-11.43h1.05v11.43zM164.22 40v-7.35h1.05v7.35zM165.25 40v-5.71h1.05v5.71zM166.28 40v-10.61h1.05v10.61zM167.32 40v-4.90h1.05v4.90zM168.35 40v-6.53h1.05v6.53zM169.38 40v-11.43h1.05v11.43zM170.41 40v-6.53h1.05v6.53zM171.45 40v-4.90h1.05v4.90zM172.48 40v-11.43h1.05v11.43zM173.51 40v-13.06h1.05v13.06zM174.55 40v-8.16h1.05v8.16zM175.58 40v-9.80h1.05v9.80zM176.61 40v-6.53h1.05v6.53zM177.64 40v-5.71h1.05v5.71zM178.68 40v-6.53h1.05v6.53zM179.71 40v-11.43h1.05v11.43zM180.74 40v-4.08h1.05v4.08zM181.78 40v-11.43h1.05v11.43zM182.81 40v-8.16h1.05v8.16zM183.84 40v-4.90h1.05v4.90zM184.87 40v-6.53h1.05v6.53zM185.91 40v-7.35h1.05v7.35zM186.94 40v-8.98h1.05v8.98zM187.97 40v-8.98h1.05v8.98zM189.01 40v-4.08h1.05v4.08zM190.04 40v-10.61h1.05v10.61zM191.07 40v-10.61h1.05v10.61zM192.11 40v-3.27h1.05v3.27zM193.14 40v-9.80h1.05v9.80zM194.17 40v-8.16h1.05v8.16zM195.20 40v-5.71h1.05v5.71zM196.24 40v-11.43h1.05v11.43zM197.27 40v-4.90h1.05v4.90zM198.30 40v-5.71h1.05v5.71zM199.34 40v-11.43h1.05v11.43zM200.37 40v-8.98h1.05v8.98zM201.40 40v-11.43h1.05v11.43zM202.43 40v-12.24h1.05v12.24zM203.47 40v-7.35h1.05v7.35zM204.50 40v-7.35h1.05v7.35zM205.53 40v-6.53h1.05v6.53zM206.57 40v-5.71h1.05v5.71zM207.60 40v-8.16h1.05v8.16zM208.63 40v-5.71h1.05v5.71zM209.66 40v-12.24h1.05v12.24zM210.70 40v-11.43h1.05v11.43zM211.73 40v-4.90h1.05v4.90zM212.76 40v-6.53h1.05v6.53zM213.80 40v-8.16h1.05v8.16zM214.83 40v-10.61h1.05v10.61zM215.86 40v-10.61h1.05v10.61zM216.89 40v-8.16h1.05v8.16zM217.93 40v-11.43h1.05v11.43zM218.96 40v-6.53h1.05v6.53zM219.99 40v-4.90h1.05v4.90zM221.03 40v-4.08h1.05v4.08zM222.06 40v-7.35h1.05v7.35zM223.09 40v-6.53h1.05v6.53zM224.12 40v-4.08h1.05v4.08zM225.16 40v-8.98h1.05v8.98zM226.19 40v-8.16h1.05v8.16zM227.22 40v-5.71h1.05v5.71zM228.26 40v-4.90h1.05v4.90zM229.29 40v-6.53h1.05v6.53zM230.32 40v-8.16h1.05v8.16zM231.35 40v-5.71h1.05v5.71zM232.39 40v-15.51h1.05v15.51zM233.42 40v-7.35h1.05v7.35zM234.45 40v-5.71h1.05v5.71zM235.49 40v-7.35h1.05v7.35zM236.52 40v-8.16h1.05v8.16zM237.55 40v-10.61h1.05v10.61zM238.58 40v-10.61h1.05v10.61zM239.62 40v-4.90h1.05v4.90zM240.65 40v-8.98h1.05v8.98zM241.68 40v-7.35h1.05v7.35zM242.72 40v-8.98h1.05v8.98zM243.75 40v-8.16h1.05v8.16zM244.78 40v-4.90h1.05v4.90zM245.81 40v-8.16h1.05v8.16zM246.85 40v-7.35h1.05v7.35zM247.88 40v-8.98h1.05v8.98zM248.91 40v-7.35h1.05v7.35zM249.95 40v-8.98h1.05v8.98zM250.98 40v-4.90h1.05v4.90zM252.01 40v-7.35h1.05v7.35zM253.04 40v-10.61h1.05v10.61zM254.08 40v-8.98h1.05v8.98zM255.11 40v-7.35h1.05v7.35zM256.14 40v-11.43h1.05v11.43zM257.18 40v-11.43h1.05v11.43zM258.21 40v-12.24h1.05v12.24zM259.24 40v-7.35h1.05v7.35zM260.27 40v-8.16h1.05v8.16zM261.31 40v-10.61h1.05v10.61zM262.34 40v-5.71h1.05v5.71zM263.37 40v-6.53h1.05v6.53zM264.41 40v-8.16h1.05v8.16zM265.44 40v-14.69h1.05v14.69zM266.47 40v-10.61h1.05v10.61zM267.51 40v-9.80h1.05v9.80zM268.54 40v-9.80h1.05v9.80zM269.57 40v-7.35h1.05v7.35zM270.60 40v-12.24h1.05v12.24zM271.64 40v-5.71h1.05v5.71zM272.67 40v-8.16h1.05v8.16zM273.70 40v-13.06h1.05v13.06zM274.74 40v-4.90h1.05v4.90zM275.77 40v-8.16h1.05v8.16zM276.80 40v-7.35h1.05v7.35zM277.83 40v-7.35h1.05v7.35zM278.87 40v-5.71h1.05v5.71zM279.90 40v-8.98h1.05v8.98zM280.93 40v-8.98h1.05v8.98zM281.97 40v-8.98h1.05v8.98zM283.00 40v-9.80h1.05v9.80zM284.03 40v-4.08h1.05v4.08zM285.06 40v-10.61h1.05v10.61zM286.10 40v-12.24h1.05v12.24zM287.13 40v-8.98h1.05v8.98zM288.16 40v-11.43h1.05v11.43zM289.20 40v-5.71h1.05v5.71zM290.23 40v-8.16h1.05v8.16zM291.26 40v-6.53h1.05v6.53zM292.29 40v-7.35h1.05v7.35zM293.33 40v-10.61h1.05v10.61zM294.36 40v-5.71h1.05v5.71zM295.39 40v-7.35h1.05v7.35zM296.43 40v-8.98h1.05v8.98zM297.46 40v-8.98h1.05v8.98zM298.49 40v-9.80h1.05v9.80zM299.52 40v-7.35h1.05v7.35zM300.56 40v-10.61h1.05v10.61zM301.59 40v-12.24h1.05v12.24zM302.62 40v-7.35h1.05v7.35zM303.66 40v-7.35h1.05v7.35zM304.69 40v-8.16h1.05v8.16zM305.72 40v-4.90h1.05v4.90zM306.75 40v-4.08h1.05v4.08zM307.79 40v-7.35h1.05v7.35zM308.82 40v-10.61h1.05v10.61zM309.85 40v-8.98h1.05v8.98zM310.89 40v-7.35h1.05v7.35zM311.92 40v-8.16h1.05v8.16zM312.95 40v-7.35h1.05v7.35zM313.98 40v-7.35h1.05v7.35zM315.02 40v-8.98h1.05v8.98zM316.05 40v-6.53h1.05v6.53zM317.08 40v-7.35h1.05v7.35zM318.12 40v-11.43h1.05v11.43zM319.15 40v-12.24h1.05v12.24zM320.18 40v-6.53h1.05v6.53zM321.21 40v-13.06h1.05v13.06zM322.25 40v-11.43h1.05v11.43zM323.28 40v-10.61h1.05v10.61zM324.31 40v-6.53h1.05v6.53zM325.35 40v-8.98h1.05v8.98zM326.38 40v-7.35h1.05v7.35zM327.41 40v-4.90h1.05v4.90zM328.44 40v-8.98h1.05v8.98zM329.48 40v-8.98h1.05v8.98zM330.51 40v-10.61h1.05v10.61zM331.54 40v-8.16h1.05v8.16zM332.58 40v-5.71h1.05v5.71zM333.61 40v-11.43h1.05v11.43zM334.64 40v-8.16h1.05v8.16zM335.67 40v-13.06h1.05v13.06zM336.71 40v-11.43h1.05v11.43zM337.74 40v-12.24h1.05v12.24zM338.77 40v-8.98h1.05v8.98zM339.81 40v-4.90h1.05v4.90zM340.84 40v-10.61h1.05v10.61zM341.87 40v-9.80h1.05v9.80zM342.91 40v-9.80h1.05v9.80zM343.94 40v-9.80h1.05v9.80zM344.97 40v-8.16h1.05v8.16zM346.00 40v-12.24h1.05v12.24zM347.04 40v-9.80h1.05v9.80zM348.07 40v-4.08h1.05v4.08zM349.10 40v-10.61h1.05v10.61zM350.14 40v-10.61h1.05v10.61zM351.17 40v-9.80h1.05v9.80zM352.20 40v-4.08h1.05v4.08zM353.23 40v-9.80h1.05v9.80zM354.27 40v-13.06h1.05v13.06zM355.30 40v-8.98h1.05v8.98zM356.33 40v-12.24h1.05v12.24zM357.37 40v-8.16h1.05v8.16zM358.40 40v-10.61h1.05v10.61zM359.43 40v-7.35h1.05v7.35zM360.46 40v-8.98h1.05v8.98zM361.50 40v-13.06h1.05v13.06zM362.53 40v-7.35h1.05v7.35zM363.56 40v-7.35h1.05v7.35zM364.60 40v-8.98h1.05v8.98zM365.63 40v-3.27h1.05v3.27zM366.66 40v-8.16h1.05v8.16zM367.69 40v-7.35h1.05v7.35zM368.73 40v-4.08h1.05v4.08zM369.76 40v-12.24h1.05v12.24zM370.79 40v-13.88h1.05v13.88zM371.83 40v-11.43h1.05v11.43zM372.86 40v-5.71h1.05v5.71zM373.89 40v-9.80h1.05v9.80zM374.92 40v-13.88h1.05v13.88zM375.96 40v-7.35h1.05v7.35z"/></svg></div>
<div class="td c5"><span class="exp"></span><span class="ic pass"><b>&#10003;</b></span> PASS (2)</div></div>
<div class="tr row"><div class="td c1">Metronidazole</div><div class="td c2">Limited</div><div class="td c3">34</div>
<div class="td c4"><svg width="397" height="60" viewBox="0 0 397 60"><path transform="translate(9,0)" fill="url(#tg)" d="M-0.01 40v-16.00h1.05v16.00zM1.02 40v-29.71h1.05v29.71zM2.06 40v-35.43h1.05v35.43zM3.09 40v-19.43h1.05v19.43zM4.12 40v-25.14h1.05v25.14zM5.15 40v-30.86h1.05v30.86zM6.19 40v-20.57h1.05v20.57zM7.22 40v-27.43h1.05v27.43zM8.25 40v-24.00h1.05v24.00zM9.29 40v-14.86h1.05v14.86zM10.32 40v-29.71h1.05v29.71zM11.35 40v-16.00h1.05v16.00zM12.38 40v-20.57h1.05v20.57zM13.42 40v-25.14h1.05v25.14zM14.45 40v-28.57h1.05v28.57zM15.48 40v-32.00h1.05v32.00zM16.52 40v-19.43h1.05v19.43zM17.55 40v-36.57h1.05v36.57zM18.58 40v-19.43h1.05v19.43zM19.61 40v-27.43h1.05v27.43zM20.65 40v-21.71h1.05v21.71zM21.68 40v-20.57h1.05v20.57zM22.71 40v-26.29h1.05v26.29zM23.75 40v-19.43h1.05v19.43zM24.78 40v-29.71h1.05v29.71zM25.81 40v-26.29h1.05v26.29zM26.84 40v-33.14h1.05v33.14zM27.88 40v-18.29h1.05v18.29zM28.91 40v-11.43h1.05v11.43zM29.94 40v-19.43h1.05v19.43zM30.98 40v-20.57h1.05v20.57zM32.01 40v-18.29h1.05v18.29zM33.04 40v-17.14h1.05v17.14zM34.07 40v-26.29h1.05v26.29zM35.11 40v-24.00h1.05v24.00zM36.14 40v-14.86h1.05v14.86zM37.17 40v-17.14h1.05v17.14zM38.21 40v-22.86h1.05v22.86zM39.24 40v-32.00h1.05v32.00zM40.27 40v-29.71h1.05v29.71zM41.31 40v-13.71h1.05v13.71zM42.34 40v-14.86h1.05v14.86zM43.37 40v-33.14h1.05v33.14zM44.40 40v-26.29h1.05v26.29zM45.44 40v-24.00h1.05v24.00zM46.47 40v-32.00h1.05v32.00zM47.50 40v-27.43h1.05v27.43zM48.54 40v-24.00h1.05v24.00zM49.57 40v-18.29h1.05v18.29zM50.60 40v-22.86h1.05v22.86zM51.63 40v-17.14h1.05v17.14zM52.67 40v-21.71h1.05v21.71zM53.70 40v-21.71h1.05v21.71zM54.73 40v-27.43h1.05v27.43zM55.77 40v-17.14h1.05v17.14zM56.80 40v-28.57h1.05v28.57zM57.83 40v-24.00h1.05v24.00zM58.86 40v-19.43h1.05v19.43zM59.90 40v-13.71h1.05v13.71zM60.93 40v-22.86h1.05v22.86zM61.96 40v-29.71h1.05v29.71zM63.00 40v-28.57h1.05v28.57zM64.03 40v-19.43h1.05v19.43zM65.06 40v-19.43h1.05v19.43zM66.09 40v-18.29h1.05v18.29zM67.13 40v-28.57h1.05v28.57zM68.16 40v-21.71h1.05v21.71zM69.19 40v-20.57h1.05v20.57zM70.23 40v-29.71h1.05v29.71zM71.26 40v-28.57h1.05v28.57zM72.29 40v-17.14h1.05v17.14zM73.32 40v-8.00h1.05v8.00zM74.36 40v-25.14h1.05v25.14zM75.39 40v-13.71h1.05v13.71zM76.42 40v-29.71h1.05v29.71zM77.46 40v-28.57h1.05v28.57zM78.49 40v-21.71h1.05v21.71zM79.52 40v-27.43h1.05v27.43zM80.55 40v-25.14h1.05v25.14zM81.59 40v-17.14h1.05v17.14zM82.62 40v-17.14h1.05v17.14zM83.65 40v-30.86h1.05v30.86zM84.69 40v-27.43h1.05v27.43zM85.72 40v-37.71h1.05v37.71zM86.75 40v-21.71h1.05v21.71zM87.78 40v-19.43h1.05v19.43zM88.82 40v-27.43h1.05v27.43zM89.85 40v-17.14h1.05v17.14zM90.88 40v-19.43h1.05v19.43zM91.92 40v-20.57h1.05v20.57zM92.95 40v-22.86h1.05v22.86zM93.98 40v-18.29h1.05v18.29zM95.01 40v-20.57h1.05v20.57zM96.05 40v-13.71h1.05v13.71zM97.08 40v-13.71h1.05v13.71zM98.11 40v-28.57h1.05v28.57zM99.15 40v-21.71h1.05v21.71zM100.18 40v-17.14h1.05v17.14zM101.21 40v-32.00h1.05v32.00zM102.24 40v-22.86h1.05v22.86zM103.28 40v-18.29h1.05v18.29zM104.31 40v-34.29h1.05v34.29zM105.34 40v-14.86h1.05v14.86zM106.38 40v-29.71h1.05v29.71zM107.41 40v-26.29h1.05v26.29zM108.44 40v-26.29h1.05v26.29zM109.47 40v-18.29h1.05v18.29zM110.51 40v-18.29h1.05v18.29zM111.54 40v-21.71h1.05v21.71zM112.57 40v-14.86h1.05v14.86zM113.61 40v-20.57h1.05v20.57zM114.64 40v-12.57h1.05v12.57zM115.67 40v-20.57h1.05v20.57zM116.71 40v-27.43h1.05v27.43zM117.74 40v-21.71h1.05v21.71zM118.77 40v-21.71h1.05v21.71zM119.80 40v-14.86h1.05v14.86zM120.84 40v-29.71h1.05v29.71zM121.87 40v-21.71h1.05v21.71zM122.90 40v-22.86h1.05v22.86zM123.94 40v-33.14h1.05v33.14zM124.97 40v-19.43h1.05v19.43zM126.00 40v-16.00h1.05v16.00zM127.03 40v-20.57h1.05v20.57zM128.07 40v-13.71h1.05v13.71zM129.10 40v-26.29h1.05v26.29zM130.13 40v-35.43h1.05v35.43zM131.17 40v-18.29h1.05v18.29zM132.20 40v-21.71h1.05v21.71zM133.23 40v-12.57h1.05v12.57zM134.26 40v-25.14h1.05v25.14zM135.30 40v-37.71h1.05v37.71zM136.33 40v-19.43h1.05v19.43zM137.36 40v-29.71h1.05v29.71zM138.40 40v-27.43h1.05v27.43zM139.43 40v-13.71h1.05v13.71zM140.46 40v-21.71h1.05v21.71zM141.49 40v-18.29h1.05v18.29zM142.53 40v-19.43h1.05v19.43zM143.56 40v-18.29h1.05v18.29zM144.59 40v-26.29h1.05v26.29zM145.63 40v-28.57h1.05v28.57zM146.66 40v-32.00h1.05v32.00zM147.69 40v-21.71h1.05v21.71zM148.72 40v-19.43h1.05v19.43zM149.76 40v-13.71h1.05v13.71zM150.79 40v-21.71h1.05v21.71zM151.82 40v-27.43h1.05v27.43zM152.86 40v-29.71h1.05v29.71zM153.89 40v-17.14h1.05v17.14zM154.92 40v-19.43h1.05v19.43zM155.95 40v-17.14h1.05v17.14zM156.99 40v-20.57h1.05v20.57zM158.02 40v-20.57h1.05v20.57zM159.05 40v-26.29h1.05v26.29zM160.09 40v-35.43h1.05v35.43zM161.12 40v-21.71h1.05v21.71zM162.15 40v-24.00h1.05v24.00zM163.18 40v-16.00h1.05v16.00zM164.22 40v-19.43h1.05v19.43zM165.25 40v-18.29h1.05v18.29zM166.28 40v-26.29h1.05v26.29zM167.32 40v-22.86h1.05v22.86zM168.35 40v-14.86h1.05v14.86zM169.38 40v-22.86h1.05v22.86zM170.41 40v-29.71h1.05v29.71zM171.45 40v-21.71h1.05v21.71zM172.48 40v-22.86h1.05v22.86zM173.51 40v-25.14h1.05v25.14zM174.55 40v-18.29h1.05v18.29zM175.58 40v-27.43h1.05v27.43zM176.61 40v-26.29h1.05v26.29zM177.64 40v-27.43h1.05v27.43zM178.68 40v-24.00h1.05v24.00zM179.71 40v-16.00h1.05v16.00zM180.74 40v-13.71h1.05v13.71zM181.78 40v-24.00h1.05v24.00zM182.81 40v-26.29h1.05v26.29zM183.84 40v-18.29h1.05v18.29zM184.87 40v-34.29h1.05v34.29zM185.91 40v-20.57h1.05v20.57zM186.94 40v-29.71h1.05v29.71zM187.97 40v-22.86h1.05v22.86zM189.01 40v-26.29h1.05v26.29zM190.04 40v-38.86h1.05v38.86zM191.07 40v-28.57h1.05v28.57zM192.11 40v-32.00h1.05v32.00zM193.14 40v-29.71h1.05v29.71zM194.17 40v-19.43h1.05v19.43zM195.20 40v-21.71h1.05v21.71zM196.24 40v-18.29h1.05v18.29zM197.27 40v-22.86h1.05v22.86zM198.30 40v-19.43h1.05v19.43zM199.34 40v-22.86h1.05v22.86zM200.37 40v-16.00h1.05v16.00zM201.40 40v-21.71h1.05v21.71zM202.43 40v-28.57h1.05v28.57zM203.47 40v-19.43h1.05v19.43zM204.50 40v-26.29h1.05v26.29zM205.53 40v-27.43h1.05v27.43zM206.57 40v-19.43h1.05v19.43zM207.60 40v-14.86h1.05v14.86zM208.63 40v-19.43h1.05v19.43zM209.66 40v-17.14h1.05v17.14zM210.70 40v-27.43h1.05v27.43zM211.73 40v-25.14h1.05v25.14zM212.76 40v-21.71h1.05v21.71zM213.80 40v-27.43h1.05v27.43zM214.83 40v-28.57h1.05v28.57zM215.86 40v-17.14h1.05v17.14zM216.89 40v-33.14h1.05v33.14zM217.93 40v-28.57h1.05v28.57zM218.96 40v-18.29h1.05v18.29zM219.99 40v-21.71h1.05v21.71zM221.03 40v-28.57h1.05v28.57zM222.06 40v-21.71h1.05v21.71zM223.09 40v-24.00h1.05v24.00zM224.12 40v-26.29h1.05v26.29zM225.16 40v-28.57h1.05v28.57zM226.19 40v-27.43h1.05v27.43zM227.22 40v-18.29h1.05v18.29zM228.26 40v-24.00h1.05v24.00zM229.29 40v-14.86h1.05v14.86zM230.32 40v-14.86h1.05v14.86zM231.35 40v-27.43h1.05v27.43zM232.39 40v-29.71h1.05v29.71zM233.42 40v-22.86h1.05v22.86zM234.45 40v-22.86h1.05v22.86zM235.49 40v-21.71h1.05v21.71zM236.52 40v-18.29h1.05v18.29zM237.55 40v-19.43h1.05v19.43zM238.58 40v-21.71h1.05v21.71zM239.62 40v-20.57h1.05v20.57zM240.65 40v-20.57h1.05v20.57zM241.68 40v-29.71h1.05v29.71zM242.72 40v-18.29h1.05v18.29zM243.75 40v-28.57h1.05v28.57zM244.78 40v-14.86h1.05v14.86zM245.81 40v-24.00h1.05v24.00zM246.85 40v-14.86h1.05v14.86zM247.88 40v-24.00h1.05v24.00zM248.91 40v-18.29h1.05v18.29zM249.95 40v-24.00h1.05v24.00zM250.98 40v-29.71h1.05v29.71zM252.01 40v-14.86h1.05v14.86zM253.04 40v-24.00h1.05v24.00zM254.08 40v-28.57h1.05v28.57zM255.11 40v-24.00h1.05v24.00zM256.14 40v-25.14h1.05v25.14zM257.18 40v-21.71h1.05v21.71zM258.21 40v-18.29h1.05v18.29zM259.24 40v-22.86h1.05v22.86zM260.27 40v-21.71h1.05v21.71zM261.31 40v-27.43h1.05v27.43zM262.34 40v-25.14h1.05v25.14zM263.37 40v-20.57h1.05v20.57zM264.41 40v-33.14h1.05v33.14zM265.44 40v-21.71h1.05v21.71zM266.47 40v-16.00h1.05v16.00zM267.51 40v-28.57h1.05v28.57zM268.54 40v-17.14h1.05v17.14zM269.57 40v-26.29h1.05v26.29zM270.60 40v-28.57h1.05v28.57zM271.64 40v-14.86h1.05v14.86zM272.67 40v-22.86h1.05v22.86zM273.70 40v-28.57h1.05v28.57zM274.74 40v-26.29h1.05v26.29zM275.77 40v-13.71h1.05v13.71zM276.80 40v-22.86h1.05v22.86zM277.83 40v-19.43h1.05v19.43zM278.87 40v-26.29h1.05v26.29zM279.90 40v-25.14h1.05v25.14zM280.93 40v-22.86h1.05v22.86zM281.97 40v-18.29h1.05v18.29zM283.00 40v-24.00h1.05v24.00zM284.03 40v-21.71h1.05v21.71zM285.06 40v-20.57h1.05v20.57zM286.10 40v-14.86h1.05v14.86zM287.13 40v-18.29h1.05v18.29zM288.16 40v-21.71h1.05v21.71zM289.20 40v-24.00h1.05v24.00zM290.23 40v-30.86h1.05v30.86zM291.26 40v-14.86h1.05v14.86zM292.29 40v-17.14h1.05v17.14zM293.33 40v-17.14h1.05v17.14zM294.36 40v-18.29h1.05v18.29zM295.39 40v-35.43h1.05v35.43zM296.43 40v-29.71h1.05v29.71zM297.46 40v-20.57h1.05v20.57zM298.49 40v-13.71h1.05v13.71zM299.52 40v-22.86h1.05v22.86zM300.56 40v-24.00h1.05v24.00zM301.59 40v-14.86h1.05v14.86zM302.62 40v-22.86h1.05v22.86zM303.66 40v-30.86h1.05v30.86zM304.69 40v-14.86h1.05v14.86zM305.72 40v-24.00h1.05v24.00zM306.75 40v-33.14h1.05v33.14zM307.79 40v-16.00h1.05v16.00zM308.82 40v-20.57h1.05v20.57zM309.85 40v-28.57h1.05v28.57zM310.89 40v-30.86h1.05v30.86zM311.92 40v-13.71h1.05v13.71zM312.95 40v-29.71h1.05v29.71zM313.98 40v-29.71h1.05v29.71zM315.02 40v-24.00h1.05v24.00zM316.05 40v-29.71h1.05v29.71zM317.08 40v-20.57h1.05v20.57zM318.12 40v-32.00h1.05v32.00zM319.15 40v-20.57h1.05v20.57zM320.18 40v-16.00h1.05v16.00zM321.21 40v-24.00h1.05v24.00zM322.25 40v-25.14h1.05v25.14zM323.28 40v-14.86h1.05v14.86zM324.31 40v-19.43h1.05v19.43zM325.35 40v-21.71h1.05v21.71zM326.38 40v-26.29h1.05v26.29zM327.41 40v-27.43h1.05v27.43zM328.44 40v-21.71h1.05v21.71zM329.48 40v-13.71h1.05v13.71zM330.51 40v-25.14h1.05v25.14zM331.54 40v-13.71h1.05v13.71zM332.58 40v-13.71h1.05v13.71zM333.61 40v-29.71h1.05v29.71zM334.64 40v-18.29h1.05v18.29zM335.67 40v-16.00h1.05v16.00zM336.71 40v-28.57h1.05v28.57zM337.74 40v-19.43h1.05v19.43zM338.77 40v-26.29h1.05v26.29zM339.81 40v-25.14h1.05v25.14zM340.84 40v-24.00h1.05v24.00zM341.87 40v-26.29h1.05v26.29zM342.91 40v-27.43h1.05v27.43zM343.94 40v-20.57h1.05v20.57zM344.97 40v-21.71h1.05v21.71zM346.00 40v-26.29h1.05v26.29zM347.04 40v-27.43h1.05v27.43zM348.07 40v-25.14h1.05v25.14zM349.10 40v-10.29h1.05v10.29zM350.14 40v-29.71h1.05v29.71zM351.17 40v-26.29h1.05v26.29zM352.20 40v-17.14h1.05v17.14zM353.23 40v-20.57h1.05v20.57zM354.27 40v-25.14h1.05v25.14zM355.30 40v-27.43h1.05v27.43zM356.33 40v-27.43h1.05v27.43zM357.37 40v-19.43h1.05v19.43zM358.40 40v-21.71h1.05v21.71zM359.43 40v-14.86h1.05v14.86zM360.46 40v-21.71h1.05v21.71zM361.50 40v-36.57h1.05v36.57zM362.53 40v-18.29h1.05v18.29zM363.56 40v-28.57h1.05v28.57zM364.60 40v-21.71h1.05v21.71zM365.63 40v-16.00h1.05v16.00zM366.66 40v-18.29h1.05v18.29zM367.69 40v-27.43h1.05v27.43zM368.73 40v-14.86h1.05v14.86zM369.76 40v-29.71h1.05v29.71zM370.79 40v-16.00h1.05v16.00zM371.83 40v-28.57h1.05v28.57zM372.86 40v-24.00h1.05v24.00zM373.89 40v-19.43h1.05v19.43zM374.92 40v-22.86h1.05v22.86zM375.96 40v-20.57h1.05v20.57z"/></svg></div>
<div class="td c5"><span class="exp open"></span><span class="ic pass"><b>&#10003;</b></span> PASS (1)</div></div>
<div class="det"><div class="itbl"><div class="tr"><div class="th">Rule</div><div class="th">Result</div></div>
<div class="tr"><div class="td">At least 1 values are missing in total</div><div class="td">PASS</div></div>
</div></div>
<div class="tr row s"><div class="td c1">Meropenem</div><div class="td c2">Broad</div><div class="td c3">19</div>
<div class="td c4"><svg width="397" height="60" viewBox="0 0 397 60"><path transform="translate(9,0)" fill="url(#tg)" d="M-0.01 40v-24.00h1.05v24.00zM1.02 40v-10.00h1.05v10.00zM2.06 40v-14.00h1.05v14.00zM3.09 40v-24.00h1.05v24.00zM4.12 40v-22.00h1.05v22.00zM5.15 40v-8.00h1.05v8.00zM6.19 40v-24.00h1.05v24.00zM7.22 40v-20.00h1.05v20.00zM8.25 40v-22.00h1.05v22.00zM9.29 40v-14.00h1.05v14.00zM10.32 40v-22.00h1.05v22.00zM11.35 40v-16.00h1.05v16.00zM12.38 40v-20.00h1.05v20.00zM13.42 40v-16.00h1.05v16.00zM14.45 40v-26.00h1.05v26.00zM15.48 40v-8.00h1.05v8.00zM16.52 40v-18.00h1.05v18.00zM17.55 40v-24.00h1.05v24.00zM18.58 40v-20.00h1.05v20.00zM19.61 40v-18.00h1.05v18.00zM20.65 40v-24.00h1.05v24.00zM21.68 40v-22.00h1.05v22.00zM22.71 40v-24.00h1.05v24.00zM23.75 40v-26.00h1.05v26.00zM24.78 40v-14.00h1.05v14.00zM25.81 40v-20.00h1.05v20.00zM26.84 40v-20.00h1.05v20.00zM27.88 40v-24.00h1.05v24.00zM28.91 40v-26.00h1.05v26.00zM29.94 40v-22.00h1.05v22.00zM30.98 40v-28.00h1.05v28.00zM32.01 40v-10.00h1.05v10.00zM33.04 40v-14.00h1.05v14.00zM34.07 40v-12.00h1.05v12.00zM35.11 40v-16.00h1.05v16.00zM36.14 40v-38.00h1.05v38.00zM37.17 40v-14.00h1.05v14.00zM38.21 40v-14.00h1.05v14.00zM39.24 40v-12.00h1.05v12.00zM40.27 40v-20.00h1.05v20.00zM41.31 40v-22.00h1.05v22.00zM42.34 40v-12.00h1.05v12.00zM43.37 40v-12.00h1.05v12.00zM44.40 40v-26.00h1.05v26.00zM45.44 40v-16.00h1.05v16.00zM46.47 40v-14.00h1.05v14.00zM47.50 40v-22.00h1.05v22.00zM48.54 40v-16.00h1.05v16.00zM49.57 40v-10.00h1.05v10.00zM50.60 40v-18.00h1.05v18.00zM51.63 40v-20.00h1.05v20.00zM52.67 40v-20.00h1.05v20.00zM53.70 40v-18.00h1.05v18.00zM54.73 40v-22.00h1.05v22.00zM55.77 40v-6.00h1.05v6.00zM56.80 40v-10.00h1.05v10.00zM57.83 40v-12.00h1.05v12.00zM58.86 40v-12.00h1.05v12.00zM59.90 40v-14.00h1.05v14.00zM60.93 40v-10.00h1.05v10.00zM61.96 40v-8.00h1.05v8.00zM63.00 40v-12.00h1.05v12.00zM64.03 40v-10.00h1.05v10.00zM65.06 40v-16.00h1.05v16.00zM66.09 40v-24.00h1.05v24.00zM67.13 40v-18.00h1.05v18.00zM68.16 40v-22.00h1.05v22.00zM69.19 40v-12.00h1.05v12.00zM70.23 40v-26.00h1.05v26.00zM71.26 40v-32.00h1.05v32.00zM72.29 40v-18.00h1.05v18.00zM73.32 40v-22.00h1.05v22.00zM74.36 40v-20.00h1.05v20.00zM75.39 40v-10.00h1.05v10.00zM76.42 40v-16.00h1.05v16.00zM77.46 40v-16.00h1.05v16.00zM78.49 40v-16.00h1.05v16.00zM79.52 40v-32.00h1.05v32.00zM80.55 40v-26.00h1.05v26.00zM81.59 40v-20.00h1.05v20.00zM82.62 40v-10.00h1.05v10.00zM83.65 40v-6.00h1.05v6.00zM84.69 40v-14.00h1.05v14.00zM85.72 40v-18.00h1.05v18.00zM86.75 40v-14.00h1.05v14.00zM87.78 40v-14.00h1.05v14.00zM88.82 40v-14.00h1.05v14.00zM89.85 40v-26.00h1.05v26.00zM90.88 40v-32.00h1.05v32.00zM91.92 40v-10.00h1.05v10.00zM92.95 40v-16.00h1.05v16.00zM93.98 40v-20.00h1.05v20.00zM95.01 40v-18.00h1.05v18.00zM96.05 40v-12.00h1.05v12.00zM97.08 40v-12.00h1.05v12.00zM98.11 40v-26.00h1.05v26.00zM99.15 40v-24.00h1.05v24.00zM100.18 40v-20.00h1.05v20.00zM101.21 40v-16.00h1.05v16.00zM102.24 40v-20.00h1.05v20.00zM103.28 40v-26.00h1.05v26.00zM104.31 40v-18.00h1.05v18.00zM105.34 40v-22.00h1.05v22.00zM106.38 40v-8.00h1.05v8.00zM107.41 40v-20.00h1.05v20.00zM108.44 40v-16.00h1.05v16.00zM109.47 40v-14.00h1.05v14.00zM110.51 40v-8.00h1.05v8.00zM111.54 40v-18.00h1.05v18.00zM112.57 40v-24.00h1.05v24.00zM113.61 40v-12.00h1.05v12.00zM114.64 40v-18.00h1.05v18.00zM115.67 40v-14.00h1.05v14.00zM116.71 40v-10.00h1.05v10.00zM117.74 40v-22.00h1.05v22.00zM118.77 40v-22.00h1.05v22.00zM119.80 40v-28.00h1.05v28.00zM120.84 40v-16.00h1.05v16.00zM121.87 40v-16.00h1.05v16.00zM122.90 40v-26.00h1.05v26.00zM123.94 40v-14.00h1.05v14.00zM124.97 40v-16.00h1.05v16.00zM126.00 40v-18.00h1.05v18.00zM127.03 40v-26.00h1.05v26.00zM128.07 40v-16.00h1.05v16.00zM129.10 40v-24.00h1.05v24.00zM130.13 40v-16.00h1.05v16.00zM131.17 40v-24.00h1.05v24.00zM132.20 40v-18.00h1.05v18.00zM133.23 40v-4.00h1.05v4.00zM134.26 40v-26.00h1.05v26.00zM135.30 40v-24.00h1.05v24.00zM136.33 40v-14.00h1.05v14.00zM137.36 40v-32.00h1.05v32.00zM138.40 40v-16.00h1.05v16.00zM139.43 40v-12.00h1.05v12.00zM140.46 40v-14.00h1.05v14.00zM141.49 40v-26.00h1.05v26.00zM142.53 40v-24.00h1.05v24.00zM143.56 40v-18.00h1.05v18.00zM144.59 40v-10.00h1.05v10.00zM145.63 40v-8.00h1.05v8.00zM146.66 40v-24.00h1.05v24.00zM147.69 40v-24.00h1.05v24.00zM148.72 40v-12.00h1.05v12.00zM149.76 40v-12.00h1.05v12.00zM150.79 40v-10.00h1.05v10.00zM151.82 40v-24.00h1.05v24.00zM152.86 40v-12.00h1.05v12.00zM153.89 40v-26.00h1.05v26.00zM154.92 40v-30.00h1.05v30.00zM155.95 40v-16.00h1.05v16.00zM156.99 40v-18.00h1.05v18.00zM158.02 40v-10.00h1.05v10.00zM159.05 40v-22.00h1.05v22.00zM160.09 40v-24.00h1.05v24.00zM161.12 40v-12.00h1.05v12.00zM162.15 40v-6.00h1.05v6.00zM163.18 40v-20.00h1.05v20.00zM164.22 40v-22.00h1.05v22.00zM165.25 40v-18.00h1.05v18.00zM166.28 40v-22.00h1.05v22.00zM167.32 40v-12.00h1.05v12.00zM168.35 40v-24.00h1.05v24.00zM169.38 40v-14.00h1.05v14.00zM170.41 40v-16.00h1.05v16.00zM171.45 40v-18.00h1.05v18.00zM172.48 40v-16.00h1.05v16.00zM173.51 40v-12.00h1.05v12.00zM174.55 40v-16.00h1.05v16.00zM175.58 40v-22.00h1.05v22.00zM176.61 40v-22.00h1.05v22.00zM177.64 40v-18.00h1.05v18.00zM178.68 40v-22.00h1.05v22.00zM179.71 40v-18.00h1.05v18.00zM180.74 40v-24.00h1.05v24.00zM181.78 40v-24.00h1.05v24.00zM182.81 40v-24.00h1.05v24.00zM183.84 40v-28.00h1.05v28.00zM184.87 40v-16.00h1.05v16.00zM185.91 40v-18.00h1.05v18.00zM186.94 40v-10.00h1.05v10.00zM187.97 40v-22.00h1.05v22.00zM189.01 40v-22.00h1.05v22.00zM190.04 40v-26.00h1.05v26.00zM191.07 40v-26.00h1.05v26.00zM192.11 40v-8.00h1.05v8.00zM193.14 40v-20.00h1.05v20.00zM194.17 40v-22.00h1.05v22.00zM195.20 40v-12.00h1.05v12.00zM196.24 40v-24.00h1.05v24.00zM197.27 40v-22.00h1.05v22.00zM198.30 40v-20.00h1.05v20.00zM199.34 40v-6.00h1.05v6.00zM200.37 40v-12.00h1.05v12.00zM201.40 40v-16.00h1.05v16.00zM202.43 40v-22.00h1.05v22.00zM203.47 40v-12.00h1.05v12.00zM204.50 40v-12.00h1.05v12.00zM205.53 40v-16.00h1.05v16.00zM206.57 40v-12.00h1.05v12.00zM207.60 40v-18.00h1.05v18.00zM208.63 40v-26.00h1.05v26.00zM209.66 40v-26.00h1.05v26.00zM210.70 40v-14.00h1.05v14.00zM211.73 40v-26.00h1.05v26.00zM212.76 40v-20.00h1.05v20.00zM213.80 40v-18.00h1.05v18.00zM214.83 40v-24.00h1.05v24.00zM215.86 40v-18.00h1.05v18.00zM216.89 40v-16.00h1.05v16.00zM217.93 40v-10.00h1.05v10.00zM218.96 40v-24.00h1.05v24.00zM219.99 40v-16.00h1.05v16.00zM221.03 40v-16.00h1.05v16.00zM222.06 40v-20.00h1.05v20.00zM223.09 40v-26.00h1.05v26.00zM224.12 40v-22.00h1.05v22.00zM225.16 40v-22.00h1.05v22.00zM226.19 40v-24.00h1.05v24.00zM227.22 40v-28.00h1.05v28.00zM228.26 40v-24.00h1.05v24.00zM229.29 40v-6.00h1.05v6.00zM230.32 40v-10.00h1.05v10.00zM231.35 40v-24.00h1.05v24.00zM232.39 40v-32.00h1.05v32.00zM233.42 40v-12.00h1.05v12.00zM234.45 40v-20.00h1.05v20.00zM235.49 40v-20.00h1.05v20.00zM236.52 40v-26.00h1.05v26.00zM237.55 40v-24.00h1.05v24.00zM238.58 40v-16.00h1.05v16.00zM239.62 40v-10.00h1.05v10.00zM240.65 40v-14.00h1.05v14.00zM241.68 40v-12.00h1.05v12.00zM242.72 40v-22.00h1.05v22.00zM243.75 40v-20.00h1.05v20.00zM244.78 40v-8.00h1.05v8.00zM245.81 40v-14.00h1.05v14.00zM246.85 40v-18.00h1.05v18.00zM247.88 40v-10.00h1.05v10.00zM248.91 40v-20.00h1.05v20.00zM249.95 40v-32.00h1.05v32.00zM250.98 40v-22.00h1.05v22.00zM252.01 40v-26.00h1.05v26.00zM253.04 40v-18.00h1.05v18.00zM254.08 40v-16.00h1.05v16.00zM255.11 40v-18.00h1.05v18.00zM256.14 40v-22.00h1.05v22.00zM257.18 40v-26.00h1.05v26.00zM258.21 40v-26.00h1.05v26.00zM259.24 40v-22.00h1.05v22.00zM260.27 40v-16.00h1.05v16.00zM261.31 40v-32.00h1.05v32.00zM262.34 40v-20.00h1.05v20.00zM263.37 40v-26.00h1.05v26.00zM264.41 40v-14.00h1.05v14.00zM265.44 40v-20.00h1.05v20.00zM266.47 40v-16.00h1.05v16.00zM267.51 40v-16.00h1.05v16.00zM268.54 40v-12.00h1.05v12.00zM269.57 40v-10.00h1.05v10.00zM270.60 40v-18.00h1.05v18.00zM271.64 40v-18.00h1.05v18.00zM272.67 40v-18.00h1.05v18.00zM273.70 40v-12.00h1.05v12.00zM274.74 40v-24.00h1.05v24.00zM275.77 40v-22.00h1.05v22.00zM276.80 40v-20.00h1.05v20.00zM277.83 40v-24.00h1.05v24.00zM278.87 40v-26.00h1.05v26.00zM279.90 40v-24.00h1.05v24.00zM280.93 40v-24.00h1.05v24.00zM281.97 40v-12.00h1.05v12.00zM283.00 40v-10.00h1.05v10.00zM284.03 40v-26.00h1.05v26.00zM285.06 40v-26.00h1.05v26.00zM286.10 40v-8.00h1.05v8.00zM287.13 40v-10.00h1.05v10.00zM288.16 40v-16.00h1.05v16.00zM289.20 40v-16.00h1.05v16.00zM290.23 40v-24.00h1.05v24.00zM291.26 40v-20.00h1.05v20.00zM292.29 40v-12.00h1.05v12.00zM293.33 40v-24.00h1.05v24.00zM294.36 40v-26.00h1.05v26.00zM295.39 40v-16.00h1.05v16.00zM296.43 40v-6.00h1.05v6.00zM297.46 40v-20.00h1.05v20.00zM298.49 40v-12.00h1.05v12.00zM299.52 40v-20.00h1.05v20.00zM300.56 40v-18.00h1.05v18.00zM301.59 40v-22.00h1.05v22.00zM302.62 40v-14.00h1.05v14.00zM303.66 40v-26.00h1.05v26.00zM304.69 40v-22.00h1.05v22.00zM305.72 40v-24.00h1.05v24.00zM306.75 40v-20.00h1.05v20.00zM307.79 40v-22.00h1.05v22.00zM308.82 40v-26.00h1.05v26.00zM309.85 40v-6.00h1.05v6.00zM310.89 40v-20.00h1.05v20.00zM311.92 40v-18.00h1.05v18.00zM312.95 40v-14.00h1.05v14.00zM313.98 40v-16.00h1.05v16.00zM315.02 40v-10.00h1.05v10.00zM316.05 40v-16.00h1.05v16.00zM317.08 40v-14.00h1.05v14.00zM318.12 40v-20.00h1.05v20.00zM319.15 40v-10.00h1.05v10.00zM320.18 40v-12.00h1.05v12.00zM321.21 40v-24.00h1.05v24.00zM322.25 40v-22.00h1.05v22.00zM323.28 40v-26.00h1.05v26.00zM324.31 40v-16.00h1.05v16.00zM325.35 40v-12.00h1.05v12.00zM326.38 40v-10.00h1.05v10.00zM327.41 40v-26.00h1.05v26.00zM328.44 40v-14.00h1.05v14.00zM329.48 40v-20.00h1.05v20.00zM330.51 40v-24.00h1.05v24.00zM331.54 40v-10.00h1.05v10.00zM332.58 40v-10.00h1.05v10.00zM333.61 40v-16.00h1.05v16.00zM334.64 40v-36.00h1.05v36.00zM335.67 40v-12.00h1.05v12.00zM336.71 40v-8.00h1.05v8.00zM337.74 40v-14.00h1.05v14.00zM338.77 40v-26.00h1.05v26.00zM339.81 40v-16.00h1.05v16.00zM340.84 40v-12.00h1.05v12.00zM341.87 40v-10.00h1.05v10.00zM342.91 40v-18.00h1.05v18.00zM343.94 40v-10.00h1.05v10.00zM344.97 40v-24.00h1.05v24.00zM346.00 40v-20.00h1.05v20.00zM347.04 40v-24.00h1.05v24.00zM348.07 40v-10.00h1.05v10.00zM349.10 40v-16.00h1.05v16.00zM350.14 40v-18.00h1.05v18.00zM351.17 40v-12.00h1.05v12.00zM352.20 40v-10.00h1.05v10.00zM353.23 40v-22.00h1.05v22.00zM354.27 40v-16.00h1.05v16.00zM355.30 40v-26.00h1.05v26.00zM356.33 40v-24.00h1.05v24.00zM357.37 40v-18.00h1.05v18.00zM358.40 40v-14.00h1.05v14.00zM359.43 40v-16.00h1.05v16.00zM360.46 40v-12.00h1.05v12.00zM361.50 40v-12.00h1.05v12.00zM362.53 40v-26.00h1.05v26.00zM363.56 40v-24.00h1.05v24.00zM364.60 40v-12.00h1.05v12.00zM365.63 40v-20.00h1.05v20.00zM366.66 40v-18.00h1.05v18.00zM367.69 40v-10.00h1.05v10.00zM368.73 40v-22.00h1.05v22.00zM369.76 40v-18.00h1.05v18.00zM370.79 40v-24.00h1.05v24.00zM371.83 40v-26.00h1.05v26.00zM372.86 40v-14.00h1.05v14.00zM373.89 40v-12.00h1.05v12.00zM374.92 40v-22.00h1.05v22.00zM375.96 40v-20.00h1.05v20.00z"/></svg></div>
<div class="td c5"><span class="exp"></span><span class="ic pass"><b>&#10003;</b></span> PASS (2)</div></div>
<div class="tr row"><div class="td c1">Vancomycin</div><div class="td c2">Limited</div><div class="td c3">3</div>
<div class="td c4"><svg width="397" height="60" viewBox="0 0 397 60"><path transform="translate(9,0)" fill="url(#tg)" d="M6.80 40v-10.00h3.00v10.00zM13.10 40v-20.00h2.00v20.00zM15.10 40v-10.00h3.00v10.00zM18.10 40v-20.00h1.80v20.00zM19.90 40v-10.00h1.00v10.00zM27.90 40v-10.00h1.20v10.00zM30.10 40v-10.00h1.00v10.00zM32.10 40v-10.00h1.00v10.00zM34.10 40v-10.00h1.10v10.00zM38.00 40v-10.00h1.40v10.00zM40.70 40v-10.00h1.50v10.00zM43.90 40v-10.00h1.80v10.00zM52.00 40v-10.00h1.30v10.00zM54.30 40v-10.00h1.50v10.00zM58.80 40v-20.00h1.30v20.00zM60.10 40v-10.00h0.70v10.00zM60.80 40v-30.00h1.00v30.00zM62.80 40v-10.00h6.30v10.00zM67.10 40v-20.00h1.20v20.00zM70.00 40v-10.00h13.80v10.00zM76.00 40v-20.00h2.00v20.00zM85.60 40v-10.00h3.30v10.00zM90.00 40v-10.00h1.90v10.00zM93.10 40v-10.00h0.80v10.00zM98.00 40v-20.00h1.20v20.00zM99.20 40v-10.00h1.00v10.00zM106.10 40v-10.00h3.90v10.00zM114.10 40v-10.00h2.80v10.00zM120.30 40v-20.00h1.60v20.00zM121.90 40v-10.00h2.10v10.00zM131.00 40v-10.00h1.20v10.00zM133.00 40v-20.00h1.40v20.00zM136.00 40v-10.00h1.70v10.00zM142.00 40v-10.00h4.80v10.00zM148.30 40v-20.00h1.70v20.00zM159.80 40v-10.00h1.20v10.00zM165.20 40v-10.00h1.00v10.00zM166.20 40v-30.00h1.70v30.00zM167.90 40v-20.00h1.00v20.00zM168.90 40v-10.00h2.00v10.00zM272.90 40v-10.00h2.50v10.00zM275.40 40v-20.00h1.60v20.00zM278.50 40v-10.00h1.30v10.00zM280.80 40v-10.00h1.20v10.00zM286.00 40v-20.00h1.30v20.00zM287.50 40v-10.00h1.70v10.00zM289.80 40v-10.00h1.90v10.00zM292.90 40v-30.00h1.90v30.00zM299.20 40v-10.00h2.50v10.00zM305.00 40v-10.00h2.90v10.00zM312.90 40v-10.00h1.00v10.00zM315.00 40v-10.00h1.00v10.00zM316.70 40v-10.00h1.30v10.00zM324.20 40v-10.00h7.50v10.00zM334.20 40v-10.00h1.60v10.00zM338.60 40v-10.00h1.50v10.00zM341.70 40v-10.00h3.10v10.00zM346.00 40v-10.00h1.10v10.00zM355.10 40v-20.00h1.60v20.00zM358.00 40v-10.00h1.60v10.00zM360.70 40v-10.00h3.50v10.00zM365.50 40v-10.00h2.80v10.00zM368.80 40v-10.00h2.60v10.00zM371.90 40v-10.00h3.00v10.00z"/></svg></div>
<div class="td c5"><span class="exp"></span><span class="ic fail"><b>&#10006;</b></span> FAIL (1/1)</div></div>
<div class="tr row s"><div class="td c1">Clarithromycin</div><div class="td c2">Broad</div><div class="td c3">16</div>
<div class="td c4"><svg width="397" height="60" viewBox="0 0 397 60"><path transform="translate(9,0)" fill="url(#tg)" d="M-0.01 40v-11.76h1.05v11.76zM1.02 40v-9.41h1.05v9.41zM2.06 40v-16.47h1.05v16.47zM3.09 40v-9.41h1.05v9.41zM4.12 40v-16.47h1.05v16.47zM5.15 40v-21.18h1.05v21.18zM6.19 40v-9.41h1.05v9.41zM7.22 40v-32.94h1.05v32.94zM8.25 40v-21.18h1.05v21.18zM9.29 40v-9.41h1.05v9.41zM10.32 40v-21.18h1.05v21.18zM11.35 40v-25.88h1.05v25.88zM12.38 40v-11.76h1.05v11.76zM13.42 40v-14.12h1.05v14.12zM14.45 40v-23.53h1.05v23.53zM15.48 40v-18.82h1.05v18.82zM16.52 40v-21.18h1.05v21.18zM17.55 40v-14.12h1.05v14.12zM18.58 40v-18.82h1.05v18.82zM19.61 40v-14.12h1.05v14.12zM20.65 40v-23.53h1.05v23.53zM21.68 40v-18.82h1.05v18.82zM22.71 40v-4.71h1.05v4.71zM23.75 40v-23.53h1.05v23.53zM24.78 40v-16.47h1.05v16.47zM25.81 40v-18.82h1.05v18.82zM26.84 40v-18.82h1.05v18.82zM27.88 40v-21.18h1.05v21.18zM28.91 40v-32.94h1.05v32.94zM29.94 40v-14.12h1.05v14.12zM30.98 40v-23.53h1.05v23.53zM32.01 40v-9.41h1.05v9.41zM33.04 40v-18.82h1.05v18.82zM34.07 40v-23.53h1.05v23.53zM35.11 40v-25.88h1.05v25.88zM36.14 40v-14.12h1.05v14.12zM37.17 40v-9.41h1.05v9.41zM38.21 40v-21.18h1.05v21.18zM39.24 40v-18.82h1.05v18.82zM40.27 40v-14.12h1.05v14.12zM41.31 40v-23.53h1.05v23.53zM42.34 40v-11.76h1.05v11.76zM43.37 40v-11.76h1.05v11.76zM44.40 40v-14.12h1.05v14.12zM45.44 40v-11.76h1.05v11.76zM46.47 40v-16.47h1.05v16.47zM47.50 40v-11.76h1.05v11.76zM48.54 40v-32.94h1.05v32.94zM49.57 40v-16.47h1.05v16.47zM50.60 40v-21.18h1.05v21.18zM51.63 40v-11.76h1.05v11.76zM52.67 40v-16.47h1.05v16.47zM53.70 40v-23.53h1.05v23.53zM54.73 40v-9.41h1.05v9.41zM55.77 40v-18.82h1.05v18.82zM56.80 40v-21.18h1.05v21.18zM57.83 40v-21.18h1.05v21.18zM58.86 40v-14.12h1.05v14.12zM59.90 40v-9.41h1.05v9.41zM60.93 40v-9.41h1.05v9.41zM61.96 40v-23.53h1.05v23.53zM63.00 40v-23.53h1.05v23.53zM64.03 40v-11.76h1.05v11.76zM65.06 40v-7.06h1.05v7.06zM66.09 40v-16.47h1.05v16.47zM67.13 40v-14.12h1.05v14.12zM68.16 40v-18.82h1.05v18.82zM69.19 40v-14.12h1.05v14.12zM70.23 40v-21.18h1.05v21.18zM71.26 40v-14.12h1.05v14.12zM72.29 40v-11.76h1.05v11.76zM73.32 40v-14.12h1.05v14.12zM74.36 40v-23.53h1.05v23.53zM75.39 40v-23.53h1.05v23.53zM76.42 40v-18.82h1.05v18.82zM77.46 40v-4.71h1.05v4.71zM78.49 40v-21.18h1.05v21.18zM79.52 40v-11.76h1.05v11.76zM80.55 40v-21.18h1.05v21.18zM81.59 40v-21.18h1.05v21.18zM82.62 40v-23.53h1.05v23.53zM83.65 40v-14.12h1.05v14.12zM84.69 40v-14.12h1.05v14.12zM85.72 40v-32.94h1.05v32.94zM86.75 40v-14.12h1.05v14.12zM87.78 40v-11.76h1.05v11.76zM88.82 40v-16.47h1.05v16.47zM89.85 40v-4.71h1.05v4.71zM90.88 40v-30.59h1.05v30.59zM91.92 40v-14.12h1.05v14.12zM92.95 40v-30.59h1.05v30.59zM93.98 40v-9.41h1.05v9.41zM95.01 40v-14.12h1.05v14.12zM96.05 40v-9.41h1.05v9.41zM97.08 40v-16.47h1.05v16.47zM98.11 40v-21.18h1.05v21.18zM99.15 40v-18.82h1.05v18.82zM100.18 40v-14.12h1.05v14.12zM101.21 40v-11.76h1.05v11.76zM102.24 40v-23.53h1.05v23.53zM103.28 40v-18.82h1.05v18.82zM104.31 40v-21.18h1.05v21.18zM105.34 40v-14.12h1.05v14.12zM106.38 40v-9.41h1.05v9.41zM107.41 40v-16.47h1.05v16.47zM108.44 40v-21.18h1.05v21.18zM109.47 40v-7.06h1.05v7.06zM110.51 40v-14.12h1.05v14.12zM111.54 40v-11.76h1.05v11.76zM112.57 40v-9.41h1.05v9.41zM113.61 40v-23.53h1.05v23.53zM114.64 40v-14.12h1.05v14.12zM115.67 40v-11.76h1.05v11.76zM116.71 40v-35.29h1.05v35.29zM117.74 40v-11.76h1.05v11.76zM118.77 40v-18.82h1.05v18.82zM119.80 40v-14.12h1.05v14.12zM120.84 40v-16.47h1.05v16.47zM121.87 40v-16.47h1.05v16.47zM122.90 40v-18.82h1.05v18.82zM123.94 40v-7.06h1.05v7.06zM124.97 40v-16.47h1.05v16.47zM126.00 40v-23.53h1.05v23.53zM127.03 40v-14.12h1.05v14.12zM128.07 40v-18.82h1.05v18.82zM129.10 40v-18.82h1.05v18.82zM130.13 40v-32.94h1.05v32.94zM131.17 40v-11.76h1.05v11.76zM132.20 40v-18.82h1.05v18.82zM133.23 40v-14.12h1.05v14.12zM134.26 40v-2.35h1.05v2.35zM135.30 40v-37.65h1.05v37.65zM136.33 40v-18.82h1.05v18.82zM137.36 40v-23.53h1.05v23.53zM138.40 40v-21.18h1.05v21.18zM139.43 40v-11.76h1.05v11.76zM140.46 40v-9.41h1.05v9.41zM141.49 40v-9.41h1.05v9.41zM142.53 40v-11.76h1.05v11.76zM143.56 40v-14.12h1.05v14.12zM144.59 40v-23.53h1.05v23.53zM145.63 40v-16.47h1.05v16.47zM146.66 40v-14.12h1.05v14.12zM147.69 40v-9.41h1.05v9.41zM148.72 40v-9.41h1.05v9.41zM149.76 40v-14.12h1.05v14.12zM150.79 40v-35.29h1.05v35.29zM151.82 40v-16.47h1.05v16.47zM152.86 40v-16.47h1.05v16.47zM153.89 40v-18.82h1.05v18.82zM154.92 40v-18.82h1.05v18.82zM155.95 40v-7.06h1.05v7.06zM156.99 40v-9.41h1.05v9.41zM158.02 40v-11.76h1.05v11.76zM159.05 40v-11.76h1.05v11.76zM160.09 40v-23.53h1.05v23.53zM161.12 40v-16.47h1.05v16.47zM162.15 40v-14.12h1.05v14.12zM163.18 40v-23.53h1.05v23.53zM164.22 40v-9.41h1.05v9.41zM165.25 40v-18.82h1.05v18.82zM166.28 40v-23.53h1.05v23.53zM167.32 40v-21.18h1.05v21.18zM168.35 40v-7.06h1.05v7.06zM169.38 40v-21.18h1.05v21.18zM170.41 40v-14.12h1.05v14.12zM171.45 40v-18.82h1.05v18.82zM172.48 40v-18.82h1.05v18.82zM173.51 40v-18.82h1.05v18.82zM174.55 40v-9.41h1.05v9.41zM175.58 40v-21.18h1.05v21.18zM176.61 40v-23.53h1.05v23.53zM177.64 40v-16.47h1.05v16.47zM178.68 40v-14.12h1.05v14.12zM179.71 40v-16.47h1.05v16.47zM180.74 40v-11.76h1.05v11.76zM181.78 40v-21.18h1.05v21.18zM182.81 40v-7.06h1.05v7.06zM183.84 40v-30.59h1.05v30.59zM184.87 40v-18.82h1.05v18.82zM185.91 40v-7.06h1.05v7.06zM186.94 40v-23.53h1.05v23.53zM187.97 40v-9.41h1.05v9.41zM189.01 40v-23.53h1.05v23.53zM190.04 40v-23.53h1.05v23.53zM191.07 40v-11.76h1.05v11.76zM192.11 40v-18.82h1.05v18.82zM193.14 40v-16.47h1.05v16.47zM194.17 40v-16.47h1.05v16.47zM195.20 40v-32.94h1.05v32.94zM196.24 40v-9.41h1.05v9.41zM197.27 40v-7.06h1.05v7.06zM198.30 40v-18.82h1.05v18.82zM199.34 40v-23.53h1.05v23.53zM200.37 40v-16.47h1.05v16.47zM201.40 40v-16.47h1.05v16.47zM202.43 40v-11.76h1.05v11.76zM203.47 40v-16.47h1.05v16.47zM204.50 40v-14.12h1.05v14.12zM205.53 40v-23.53h1.05v23.53zM206.57 40v-16.47h1.05v16.47zM207.60 40v-16.47h1.05v16.47zM208.63 40v-18.82h1.05v18.82zM209.66 40v-7.06h1.05v7.06zM210.70 40v-9.41h1.05v9.41zM211.73 40v-25.88h1.05v25.88zM212.76 40v-23.53h1.05v23.53zM213.80 40v-21.18h1.05v21.18zM214.83 40v-11.76h1.05v11.76zM215.86 40v-16.47h1.05v16.47zM216.89 40v-23.53h1.05v23.53zM217.93 40v-14.12h1.05v14.12zM218.96 40v-14.12h1.05v14.12zM219.99 40v-32.94h1.05v32.94zM221.03 40v-23.53h1.05v23.53zM222.06 40v-7.06h1.05v7.06zM223.09 40v-16.47h1.05v16.47zM224.12 40v-16.47h1.05v16.47zM225.16 40v-11.76h1.05v11.76zM226.19 40v-14.12h1.05v14.12zM227.22 40v-23.53h1.05v23.53zM228.26 40v-28.24h1.05v28.24zM229.29 40v-18.82h1.05v18.82zM230.32 40v-9.41h1.05v9.41zM231.35 40v-9.41h1.05v9.41zM232.39 40v-32.94h1.05v32.94zM233.42 40v-9.41h1.05v9.41zM234.45 40v-9.41h1.05v9.41zM235.49 40v-14.12h1.05v14.12zM236.52 40v-16.47h1.05v16.47zM237.55 40v-16.47h1.05v16.47zM238.58 40v-11.76h1.05v11.76zM239.62 40v-14.12h1.05v14.12zM240.65 40v-9.41h1.05v9.41zM241.68 40v-9.41h1.05v9.41zM242.72 40v-21.18h1.05v21.18zM243.75 40v-11.76h1.05v11.76zM244.78 40v-21.18h1.05v21.18zM245.81 40v-16.47h1.05v16.47zM246.85 40v-18.82h1.05v18.82zM247.88 40v-23.53h1.05v23.53zM248.91 40v-11.76h1.05v11.76zM249.95 40v-14.12h1.05v14.12zM250.98 40v-14.12h1.05v14.12zM252.01 40v-14.12h1.05v14.12zM253.04 40v-18.82h1.05v18.82zM254.08 40v-7.06h1.05v7.06zM255.11 40v-18.82h1.05v18.82zM256.14 40v-14.12h1.05v14.12zM257.18 40v-11.76h1.05v11.76zM258.21 40v-23.53h1.05v23.53zM259.24 40v-23.53h1.05v23.53zM260.27 40v-16.47h1.05v16.47zM261.31 40v-11.76h1.05v11.76zM262.34 40v-23.53h1.05v23.53zM263.37 40v-23.53h1.05v23.53zM264.41 40v-11.76h1.05v11.76zM265.44 40v-23.53h1.05v23.53zM266.47 40v-18.82h1.05v18.82zM267.51 40v-21.18h1.05v21.18zM268.54 40v-14.12h1.05v14.12zM269.57 40v-21.18h1.05v21.18zM270.60 40v-14.12h1.05v14.12zM271.64 40v-23.53h1.05v23.53zM272.67 40v-30.59h1.05v30.59zM273.70 40v-18.82h1.05v18.82zM274.74 40v-23.53h1.05v23.53zM275.77 40v-7.06h1.05v7.06zM276.80 40v-14.12h1.05v14.12zM277.83 40v-9.41h1.05v9.41zM278.87 40v-23.53h1.05v23.53zM279.90 40v-14.12h1.05v14.12zM280.93 40v-14.12h1.05v14.12zM281.97 40v-9.41h1.05v9.41zM283.00 40v-23.53h1.05v23.53zM284.03 40v-18.82h1.05v18.82zM285.06 40v-21.18h1.05v21.18zM286.10 40v-7.06h1.05v7.06zM287.13 40v-25.88h1.05v25.88zM288.16 40v-9.41h1.05v9.41zM289.20 40v-14.12h1.05v14.12zM290.23 40v-11.76h1.05v11.76zM291.26 40v-18.82h1.05v18.82zM292.29 40v-16.47h1.05v16.47zM293.33 40v-18.82h1.05v18.82zM294.36 40v-23.53h1.05v23.53zM295.39 40v-14.12h1.05v14.12zM296.43 40v-9.41h1.05v9.41zM297.46 40v-18.82h1.05v18.82zM298.49 40v-23.53h1.05v23.53zM299.52 40v-16.47h1.05v16.47zM300.56 40v-9.41h1.05v9.41zM301.59 40v-9.41h1.05v9.41zM302.62 40v-21.18h1.05v21.18zM303.66 40v-11.76h1.05v11.76zM304.69 40v-28.24h1.05v28.24zM305.72 40v-18.82h1.05v18.82zM306.75 40v-18.82h1.05v18.82zM307.79 40v-18.82h1.05v18.82zM308.82 40v-9.41h1.05v9.41zM309.85 40v-11.76h1.05v11.76zM310.89 40v-18.82h1.05v18.82zM311.92 40v-21.18h1.05v21.18zM312.95 40v-9.41h1.05v9.41zM313.98 40v-25.88h1.05v25.88zM315.02 40v-11.76h1.05v11.76zM316.05 40v-14.12h1.05v14.12zM317.08 40v-9.41h1.05v9.41zM318.12 40v-16.47h1.05v16.47zM319.15 40v-23.53h1.05v23.53zM320.18 40v-28.24h1.05v28.24zM321.21 40v-14.12h1.05v14.12zM322.25 40v-16.47h1.05v16.47zM323.28 40v-16.47h1.05v16.47zM324.31 40v-7.06h1.05v7.06zM325.35 40v-9.41h1.05v9.41zM326.38 40v-14.12h1.05v14.12zM327.41 40v-23.53h1.05v23.53zM328.44 40v-30.59h1.05v30.59zM329.48 40v-14.12h1.05v14.12zM330.51 40v-14.12h1.05v14.12zM331.54 40v-11.76h1.05v11.76zM332.58 40v-14.12h1.05v14.12zM333.61 40v-35.29h1.05v35.29zM334.64 40v-21.18h1.05v21.18zM335.67 40v-14.12h1.05v14.12zM336.71 40v-9.41h1.05v9.41zM337.74 40v-25.88h1.05v25.88zM338.77 40v-21.18h1.05v21.18zM339.81 40v-16.47h1.05v16.47zM340.84 40v-11.76h1.05v11.76zM341.87 40v-14.12h1.05v14.12zM342.91 40v-9.41h1.05v9.41zM343.94 40v-11.76h1.05v11.76zM344.97 40v-11.76h1.05v11.76zM346.00 40v-30.59h1.05v30.59zM347.04 40v-9.41h1.05v9.41zM348.07 40v-11.76h1.05v11.76zM349.10 40v-9.41h1.05v9.41zM350.14 40v-14.12h1.05v14.12zM351.17 40v-21.18h1.05v21.18zM352.20 40v-23.53h1.05v23.53zM353.23 40v-21.18h1.05v21.18zM354.27 40v-9.41h1.05v9.41zM355.30 40v-18.82h1.05v18.82zM356.33 40v-21.18h1.05v21.18zM357.37 40v-9.41h1.05v9.41zM358.40 40v-16.47h1.05v16.47zM359.43 40v-16.47h1.05v16.47zM360.46 40v-23.53h1.05v23.53zM361.50 40v-28.24h1.05v28.24zM362.53 40v-7.06h1.05v7.06zM363.56 40v-23.53h1.05v23.53zM364.60 40v-18.82h1.05v18.82zM365.63 40v-16.47h1.05v16.47zM366.66 40v-21.18h1.05v21.18zM367.69 40v-23.53h1.05v23.53zM368.73 40v-21.18h1.05v21.18zM369.76 40v-14.12h1.05v14.12zM370.79 40v-23.53h1.05v23.53zM371.83 40v-9.41h1.05v9.41zM372.86 40v-23.53h1.05v23.53zM373.89 40v-21.18h1.05v21.18zM374.92 40v-21.18h1.05v21.18zM375.96 40v-9.41h1.05v9.41z"/></svg></div>
<div class="td c5"><span class="exp"></span><span class="ic pass"><b>&#10003;</b></span> PASS (2)</div></div>
<div class="tr row"><div class="td c1">Linezolid</div><div class="td c2">Limited</div><div class="td c3">2</div>
<div class="td c4"><svg width="397" height="60" viewBox="0 0 397 60"><path transform="translate(9,0)" fill="url(#tg)" d="M8.00 40v-13.90h1.20v13.90zM11.00 40v-13.90h1.20v13.90zM14.70 40v-13.90h1.60v13.90zM24.40 40v-13.90h1.10v13.90zM27.10 40v-13.90h1.70v13.90zM35.80 40v-13.90h1.20v13.90zM43.70 40v-13.90h1.70v13.90zM62.80 40v-13.90h1.20v13.90zM77.30 40v-13.90h1.30v13.90zM91.40 40v-13.90h1.30v13.90zM106.00 40v-13.90h1.60v13.90zM122.60 40v-13.90h1.20v13.90zM134.00 40v-13.90h1.40v13.90zM136.00 40v-26.90h1.70v26.90zM139.90 40v-13.90h1.90v13.90zM147.00 40v-13.90h1.70v13.90zM171.30 40v-13.90h1.50v13.90zM199.00 40v-13.90h1.30v13.90zM206.10 40v-13.90h1.30v13.90zM211.30 40v-13.90h1.30v13.90zM232.00 40v-13.90h1.00v13.90zM233.30 40v-13.90h1.00v13.90zM234.60 40v-13.90h1.00v13.90zM235.90 40v-13.90h1.60v13.90zM242.40 40v-26.90h1.30v26.90zM245.00 40v-13.90h1.20v13.90zM247.20 40v-13.90h1.20v13.90zM260.30 40v-13.90h1.20v13.90zM297.20 40v-13.90h1.50v13.90zM318.00 40v-13.90h1.00v13.90zM325.00 40v-13.90h1.20v13.90zM326.50 40v-13.90h2.70v13.90zM329.80 40v-13.90h2.20v13.90zM332.30 40v-13.90h1.40v13.90zM344.70 40v-13.90h1.10v13.90zM365.50 40v-13.90h1.20v13.90z"/></svg></div>
<div class="td c5"><span class="exp"></span><span class="ic pass"><b>&#10003;</b></span> PASS (1)</div></div>
</div></div></body></html>
